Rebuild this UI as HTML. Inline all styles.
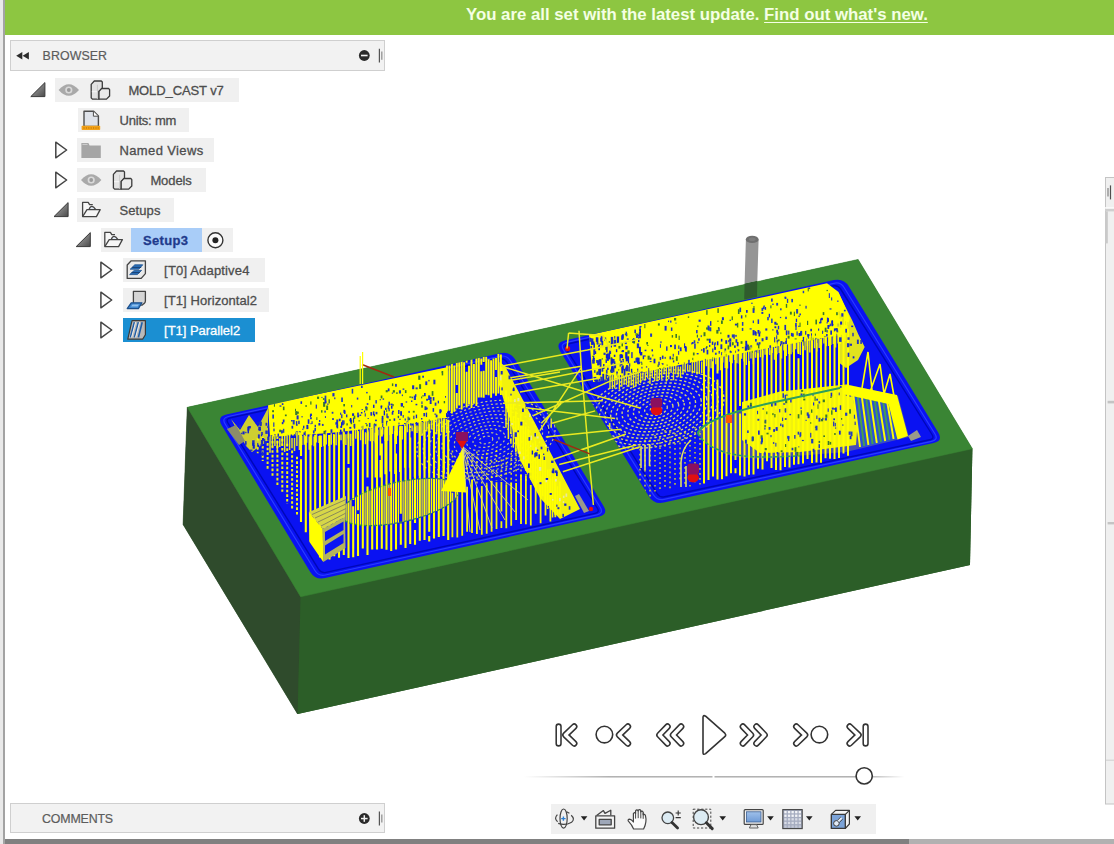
<!DOCTYPE html>
<html lang="en">
<head>
<meta charset="utf-8">
<title>MOLD_CAST v7</title>
<style>
html,body{margin:0;padding:0;}
body{width:1114px;height:844px;position:relative;overflow:hidden;background:#fff;font-family:"Liberation Sans",sans-serif;font-size:12px;color:#4a4a4a;}
.abs{position:absolute;}
#lstripe{left:0;top:0;width:3px;height:844px;background:#e9e9e9;}
#lline{left:3px;top:0;width:1.5px;height:844px;background:#a3a3a3;}
#banner{left:4.5px;top:0;width:1110px;height:35px;background:#8dc641;}
#banner span{position:absolute;left:461.5px;top:5.4px;white-space:nowrap;color:#f4ffe4;font-weight:bold;font-size:16.8px;line-height:20px;}
#banner u{text-decoration-thickness:1.2px;text-underline-offset:2px;}
.hdr{left:10px;width:372.6px;height:28.4px;background:#f2f2f2;border:1px solid #cfcfcf;box-sizing:content-box;}
.hdr .t{position:absolute;top:0;line-height:30px;font-size:12.4px;color:#5c5c5c;white-space:nowrap;-webkit-text-stroke:0.2px;}
.rowbg{position:absolute;height:24.4px;background:#f0f0f0;}
.lbl{position:absolute;white-space:nowrap;line-height:24px;height:24px;font-size:13px;color:#4a4a4a;-webkit-text-stroke:0.3px;}
#botbar1{left:4.5px;top:838.8px;width:904px;height:6px;background:#808080;}
#botbar2{left:908.6px;top:838.8px;width:206px;height:6px;background:#b1b1b1;}
#navbar{left:550.5px;top:804.4px;width:325.5px;height:29.2px;background:#f0f0f0;}
svg{position:absolute;left:0;top:0;overflow:visible;}
</style>
</head>
<body>
<div class="abs" id="lstripe"></div>
<div class="abs" id="lline"></div>
<div class="abs" id="banner"><span>You are all set with the latest update. <u>Find out what's new.</u></span></div>
<svg width="1114" height="844" viewBox="0 0 1114 844">
<defs><clipPath id="cl"><path d="M221.8 425.4 Q216.6 416.8 226.4 414.6 L500.2 353.2 Q510.0 351.0 515.2 359.6 L603.5 505.9 Q608.7 514.5 598.9 516.7 L325.1 578.1 Q315.3 580.3 310.1 571.7 Z"/></clipPath><clipPath id="cr"><path d="M560.2 351.2 Q555.0 342.7 564.8 340.5 L833.9 280.1 Q843.7 277.9 848.9 286.4 L938.2 432.5 Q943.4 441.0 933.6 443.1 L663.8 502.6 Q654.0 504.7 648.8 496.2 Z"/></clipPath><clipPath id="cell"><ellipse cx="400" cy="502" rx="61" ry="20" transform="rotate(-12.5 400 502)"/></clipPath></defs>
<polygon points="187.3,407.3 858.1,259.4 972.4,448.7 970.0,565.0 297.6,714.0 183.1,524.5" fill="#2c5e28"/>
<polygon points="187.3,407.3 300.6,596.8 297.6,714.0 183.1,524.5" fill="#2f4b2c" stroke="#2f4b2c" stroke-width="0.6"/>
<polygon points="300.6,596.8 972.4,448.7 970.0,565.0 297.6,714.0" fill="#2c5e28"/>
<polygon points="187.3,407.3 858.1,259.4 972.4,448.7 300.6,596.8" fill="#3a8534" stroke="#3a8534" stroke-width="0.5"/>
<path d="M745.9 239.4 L744.6 283.6 L757.3 280.8 L758.6 239.4 Z" fill="#959595"/>
<path d="M744.6 283.6 L744.2 299.6 L757 296.8 L757.3 280.8 Z" fill="#2f5c2d"/>
<ellipse cx="752.2" cy="239.4" rx="6.4" ry="3.7" fill="#6f6f6f"/><ellipse cx="752.2" cy="239.2" rx="3.4" ry="1.8" fill="#7d7d7d"/>
<path d="M221.8 425.4 Q216.6 416.8 226.4 414.6 L500.2 353.2 Q510.0 351.0 515.2 359.6 L603.5 505.9 Q608.7 514.5 598.9 516.7 L325.1 578.1 Q315.3 580.3 310.1 571.7 Z" fill="#0a12f2"/>
<path d="M225.1 424.0 Q221.5 418.0 228.3 416.5 L499.9 356.3 Q506.8 354.8 510.4 360.8 L600.2 507.3 Q603.8 513.3 597.0 514.8 L325.4 575.0 Q318.5 576.5 314.9 570.5 Z" fill="none" stroke="#2a3cff" stroke-width="1.2"/>
<path d="M228.0 423.2 Q225.3 419.0 230.2 417.9 L499.3 358.9 Q504.2 357.9 506.8 362.1 L597.3 508.1 Q600.0 512.3 595.1 513.4 L326.0 572.4 Q321.1 573.4 318.5 569.2 Z" fill="none" stroke="#0008b8" stroke-width="1.4"/>
<path d="M560.2 351.2 Q555.0 342.7 564.8 340.5 L833.9 280.1 Q843.7 277.9 848.9 286.4 L938.2 432.5 Q943.4 441.0 933.6 443.1 L663.8 502.6 Q654.0 504.7 648.8 496.2 Z" fill="#0a12f2"/>
<path d="M563.5 349.9 Q559.8 343.9 566.7 342.4 L833.7 283.3 Q840.5 281.7 844.2 287.7 L934.9 433.8 Q938.6 439.8 931.7 441.3 L664.1 499.4 Q657.2 500.9 653.5 494.9 Z" fill="none" stroke="#2a3cff" stroke-width="1.2"/>
<path d="M566.4 349.1 Q563.7 344.9 568.6 343.8 L833.1 285.9 Q837.9 284.8 840.6 289.0 L932.0 434.5 Q934.7 438.8 929.8 439.8 L664.7 496.8 Q659.8 497.8 657.1 493.6 Z" fill="none" stroke="#0008b8" stroke-width="1.4"/>
<g clip-path="url(#cl)">
<ellipse cx="486" cy="440" rx="6.9" ry="3.7" fill="none" stroke="#d4d47a" stroke-width="1.2" stroke-dasharray="2.2 2.4" transform="rotate(-12 486 440)" opacity="0.9"/><ellipse cx="486" cy="440" rx="13.2" ry="7.1" fill="none" stroke="#d4d47a" stroke-width="1.2" stroke-dasharray="2.2 2.4" transform="rotate(-12 486 440)" opacity="0.9"/><ellipse cx="486" cy="440" rx="19.5" ry="10.5" fill="none" stroke="#d4d47a" stroke-width="1.2" stroke-dasharray="2.2 2.4" transform="rotate(-12 486 440)" opacity="0.9"/><ellipse cx="486" cy="440" rx="25.9" ry="13.9" fill="none" stroke="#d4d47a" stroke-width="1.2" stroke-dasharray="2.2 2.4" transform="rotate(-12 486 440)" opacity="0.9"/><ellipse cx="486" cy="440" rx="32.2" ry="17.4" fill="none" stroke="#d4d47a" stroke-width="1.2" stroke-dasharray="2.2 2.4" transform="rotate(-12 486 440)" opacity="0.9"/><ellipse cx="486" cy="440" rx="38.5" ry="20.8" fill="none" stroke="#d4d47a" stroke-width="1.2" stroke-dasharray="2.2 2.4" transform="rotate(-12 486 440)" opacity="0.9"/><ellipse cx="486" cy="440" rx="44.8" ry="24.2" fill="none" stroke="#d4d47a" stroke-width="1.2" stroke-dasharray="2.2 2.4" transform="rotate(-12 486 440)" opacity="0.9"/><ellipse cx="486" cy="440" rx="51.2" ry="27.6" fill="none" stroke="#d4d47a" stroke-width="1.2" stroke-dasharray="2.2 2.4" transform="rotate(-12 486 440)" opacity="0.9"/><ellipse cx="486" cy="440" rx="57.5" ry="31.0" fill="none" stroke="#d4d47a" stroke-width="1.2" stroke-dasharray="2.2 2.4" transform="rotate(-12 486 440)" opacity="0.9"/><ellipse cx="486" cy="440" rx="63.8" ry="34.4" fill="none" stroke="#d4d47a" stroke-width="1.2" stroke-dasharray="2.2 2.4" transform="rotate(-12 486 440)" opacity="0.9"/><ellipse cx="486" cy="440" rx="70.1" ry="37.8" fill="none" stroke="#d4d47a" stroke-width="1.2" stroke-dasharray="2.2 2.4" transform="rotate(-12 486 440)" opacity="0.9"/>
<path d="M252.9 439.7V444.7M257.8 438.0V453.3M262.7 436.7V461.1M267.6 438.5V470.4M272.5 436.4V476.6M277.4 436.4V486.8M282.3 438.8V491.8M287.2 443.7V503.7M292.1 450.6V510.4M297.0 456.7V516.2" stroke="#ffff00" stroke-width="2.0" fill="none" opacity="0.95" stroke-dasharray="2.6 2"/>
<path d="M301.0 435.0V456.1M301.0 459.3V522.1M305.8 434.3V532.3M310.5 434.3V541.4M315.2 434.8V547.9M315.2 548.2V548.2M320.0 435.5V557.6M324.8 431.5V529.9M324.8 535.7V559.9M329.5 434.9V559.4M334.2 434.5V545.3M334.2 551.6V556.2M339.0 434.7V512.1M339.0 520.6V557.7M343.8 429.8V554.9M348.5 433.4V464.1M348.5 467.8V558.0M353.2 427.3V500.0M353.2 506.2V557.3M358.0 427.5V510.2M358.0 514.0V556.0M362.8 428.3V548.4M362.8 552.0V552.0M367.5 426.9V477.5M367.5 486.4V555.1M372.2 428.4V549.5M377.0 425.2V549.5M381.8 425.2V436.4M381.8 443.5V548.8M386.5 424.1V549.7M391.2 424.8V550.9M396.0 424.9V444.1M396.0 453.4V549.5M400.8 425.7V513.8M400.8 523.4V544.8M405.5 421.4V548.1M410.2 423.2V427.9M410.2 437.6V544.0M415.0 420.4V522.9M415.0 530.1V544.8M419.8 420.1V540.7M424.5 418.1V540.1M429.2 422.2V531.7M429.2 536.1V541.5M434.0 416.6V538.5M438.8 416.2V537.1M443.5 418.7V535.9M448.2 419.7V540.1" stroke="#ffff00" stroke-width="2.1" fill="none" opacity="1.0"/>
<path d="M452.4 487.9V489.6M452.4 492.7V537.2M457.3 489.6V537.4M462.2 480.2V535.8M467.1 486.8V531.7M472.0 479.8V533.0M476.9 487.5V534.0M481.8 486.0V534.8M486.7 484.4V533.8M491.6 481.2V531.7M496.5 482.3V529.1M501.4 481.9V511.4M501.4 521.3V528.0M506.3 484.4V528.2M511.2 482.4V525.8M516.1 483.0V519.9M521.0 474.4V524.1M525.9 475.9V524.2M530.8 479.3V479.8M530.8 484.9V525.4M535.7 479.4V513.7M535.7 517.3V517.3M540.6 476.6V523.2M545.5 478.3V515.4M550.4 479.2V521.6M555.3 474.5V517.3" stroke="#ffff00" stroke-width="1.8" fill="none" opacity="0.95"/>
<path d="M452.4 450.6V486.0M457.3 459.0V490.2M462.2 457.5V491.4M467.1 452.3V482.0M472.0 454.4V483.3M476.9 451.6V485.0M481.8 456.5V485.9M486.7 452.8V490.1M491.6 460.8V485.4M496.5 449.9V480.4M501.4 459.5V480.5M506.3 457.5V486.8M511.2 452.7V489.5M516.1 449.2V481.6M521.0 454.5V480.3M525.9 459.0V482.8M530.8 450.7V480.6M535.7 456.6V485.4" stroke="#ffff00" stroke-width="1.6" fill="none" opacity="0.8" stroke-dasharray="2 3"/>
<path d="M375.4 432.7V477.5M380.3 436.0V455.6M380.3 459.9V477.4M385.2 424.0V474.3M390.1 425.3V471.5M395.0 430.9V473.9M399.9 431.0V471.9M404.8 432.2V467.8M409.7 429.3V467.8M414.6 427.5V476.7M419.5 426.2V475.8M424.4 430.1V470.3M429.3 420.5V472.9M434.2 425.2V467.7M434.2 472.4V472.4M439.1 428.5V469.7M444.0 420.0V473.7" stroke="#ffff00" stroke-width="1.7" fill="none" opacity="1.0"/>
<path d="M506.0 390.5V427.8M508.4 396.8V439.0M510.9 395.9V434.1M510.9 438.3V443.7M513.4 403.2V409.8M513.4 416.4V447.7M515.8 411.4V452.5M518.3 417.9V453.4M520.7 413.6V454.9M523.2 419.9V464.3M525.6 426.5V469.7M528.1 428.7V469.4M530.5 438.9V472.0M533.0 443.8V479.4M535.4 440.5V483.8M537.9 448.8V483.0M540.3 452.2V491.0M542.8 456.9V496.2M545.2 456.3V501.0M547.7 469.5V509.1M550.1 468.9V505.4M552.6 476.6V517.5M555.0 475.9V514.7M557.5 486.3V514.4M559.9 481.6V514.5" stroke="#ffff00" stroke-width="1.5" fill="none" opacity="0.95"/>
<g clip-path="url(#cell)"><path d="M336.6 470.0V535.0M341.4 470.0V535.0M346.1 470.0V535.0M350.9 470.0V535.0M355.6 470.0V535.0M360.4 470.0V535.0M365.1 470.0V535.0M369.9 470.0V535.0M374.6 470.0V535.0M379.4 470.0V535.0M384.1 470.0V535.0M388.9 470.0V535.0M393.6 470.0V535.0M398.4 470.0V535.0M403.1 470.0V535.0M407.9 470.0V535.0M412.6 470.0V535.0M417.4 470.0V535.0M422.1 470.0V535.0M426.9 470.0V535.0M431.6 470.0V535.0M436.4 470.0V535.0M441.1 470.0V535.0M445.9 470.0V535.0M450.6 470.0V535.0M455.4 470.0V535.0M460.1 470.0V535.0" stroke="#ffff00" stroke-width="1.25" fill="none" opacity="1.0"/></g>
<ellipse cx="400" cy="502" rx="61" ry="20" transform="rotate(-12.5 400 502)" fill="none" stroke="#2f8f4a" stroke-width="1.3" stroke-dasharray="3 2"/>
<polygon points="268.0,404.6 410.0,375.0 447.0,367.3 447.0,418.0 410.0,424.0 330.0,433.0 270.0,437.0" fill="#ffff00"/>
<rect x="366.7" y="403.2" width="1.7" height="1.6" fill="#1a2acc"/><rect x="388.5" y="407.7" width="1.2" height="3.6" fill="#1a2acc"/><rect x="404.9" y="390.1" width="1.6" height="3.0" fill="#3a7a2a"/><rect x="332.4" y="393.1" width="2.1" height="3.3" fill="#1a2acc"/><rect x="380.7" y="395.5" width="1.7" height="2.9" fill="#3a7a2a"/><rect x="412.1" y="385.3" width="2.1" height="3.9" fill="#1a2acc"/><rect x="413.8" y="395.6" width="2.1" height="4.4" fill="#223ec0"/><rect x="334.2" y="397.4" width="1.2" height="1.8" fill="#1a2acc"/><rect x="331.7" y="411.8" width="1.7" height="1.9" fill="#223ec0"/><rect x="281.8" y="403.2" width="1.6" height="1.8" fill="#1a2acc"/><rect x="272.1" y="410.2" width="1.9" height="2.0" fill="#3a7a2a"/><rect x="358.4" y="420.4" width="1.8" height="1.0" fill="#3a7a2a"/><rect x="312.9" y="430.4" width="1.7" height="3.0" fill="#223ec0"/><rect x="382.2" y="423.7" width="1.1" height="3.3" fill="#1a2acc"/><rect x="421.2" y="405.1" width="1.7" height="2.6" fill="#3a7a2a"/><rect x="343.3" y="404.0" width="1.7" height="2.4" fill="#3a7a2a"/><rect x="434.4" y="413.6" width="1.9" height="1.1" fill="#1a2acc"/><rect x="372.9" y="411.4" width="1.5" height="3.6" fill="#1a2acc"/><rect x="428.7" y="419.5" width="1.1" height="4.8" fill="#3a7a2a"/><rect x="281.2" y="430.4" width="1.5" height="2.8" fill="#1a2acc"/><rect x="293.8" y="434.2" width="1.3" height="3.7" fill="#1a2acc"/><rect x="379.7" y="399.1" width="1.2" height="1.2" fill="#223ec0"/><rect x="375.6" y="411.9" width="1.8" height="2.4" fill="#223ec0"/><rect x="438.5" y="418.5" width="1.3" height="1.4" fill="#3a7a2a"/><rect x="408.4" y="410.9" width="1.4" height="2.0" fill="#223ec0"/><rect x="397.8" y="416.0" width="1.2" height="2.1" fill="#1a2acc"/><rect x="344.1" y="410.7" width="1.1" height="3.1" fill="#1a2acc"/><rect x="443.7" y="401.0" width="1.4" height="2.3" fill="#3a7a2a"/><rect x="412.8" y="410.8" width="1.9" height="1.8" fill="#3a7a2a"/><rect x="401.8" y="394.5" width="1.2" height="1.6" fill="#223ec0"/><rect x="326.2" y="405.5" width="1.9" height="4.5" fill="#3a7a2a"/><rect x="385.0" y="407.8" width="1.6" height="2.2" fill="#223ec0"/><rect x="282.9" y="406.6" width="1.6" height="3.6" fill="#3a7a2a"/><rect x="323.5" y="430.8" width="1.7" height="3.7" fill="#3a7a2a"/><rect x="397.8" y="415.7" width="1.3" height="1.5" fill="#3a7a2a"/><rect x="385.7" y="390.1" width="2.1" height="2.2" fill="#3a7a2a"/><rect x="346.4" y="423.3" width="1.4" height="2.2" fill="#3a7a2a"/><rect x="441.2" y="418.2" width="1.6" height="1.3" fill="#3a7a2a"/><rect x="272.3" y="414.5" width="1.7" height="4.1" fill="#223ec0"/><rect x="368.9" y="422.9" width="1.6" height="4.2" fill="#223ec0"/><rect x="349.3" y="426.9" width="2.0" height="1.8" fill="#1a2acc"/><rect x="365.4" y="406.9" width="2.2" height="3.5" fill="#3a7a2a"/><rect x="279.5" y="405.4" width="1.9" height="1.3" fill="#1a2acc"/><rect x="414.1" y="396.7" width="1.9" height="2.9" fill="#223ec0"/><rect x="328.5" y="399.3" width="1.4" height="4.1" fill="#3a7a2a"/><rect x="388.4" y="401.7" width="1.6" height="3.8" fill="#223ec0"/><rect x="351.2" y="405.0" width="1.0" height="2.4" fill="#1a2acc"/><rect x="411.6" y="396.7" width="1.5" height="1.6" fill="#223ec0"/><rect x="297.0" y="411.6" width="1.8" height="2.2" fill="#3a7a2a"/><rect x="441.6" y="371.4" width="1.4" height="1.4" fill="#223ec0"/><rect x="295.8" y="431.4" width="2.1" height="3.9" fill="#1a2acc"/><rect x="310.1" y="417.3" width="1.7" height="1.9" fill="#1a2acc"/><rect x="428.1" y="395.4" width="2.1" height="4.6" fill="#223ec0"/><rect x="366.1" y="424.3" width="1.6" height="2.0" fill="#3a7a2a"/><rect x="431.7" y="391.1" width="1.7" height="4.7" fill="#3a7a2a"/><rect x="422.4" y="395.1" width="1.3" height="1.5" fill="#3a7a2a"/><rect x="406.6" y="422.2" width="1.1" height="4.5" fill="#1a2acc"/><rect x="343.4" y="428.3" width="1.5" height="4.0" fill="#1a2acc"/><rect x="314.4" y="427.9" width="1.6" height="3.4" fill="#223ec0"/><rect x="315.7" y="404.6" width="1.2" height="4.0" fill="#1a2acc"/><rect x="304.6" y="431.2" width="1.2" height="1.5" fill="#3a7a2a"/><rect x="316.3" y="417.2" width="1.1" height="2.8" fill="#3a7a2a"/><rect x="282.8" y="419.5" width="1.7" height="2.9" fill="#1a2acc"/><rect x="409.3" y="396.4" width="2.1" height="1.3" fill="#3a7a2a"/><rect x="305.3" y="405.2" width="1.6" height="1.6" fill="#3a7a2a"/><rect x="324.6" y="395.6" width="1.7" height="4.8" fill="#223ec0"/><rect x="396.0" y="392.4" width="1.8" height="1.4" fill="#3a7a2a"/><rect x="389.0" y="419.3" width="1.9" height="1.5" fill="#3a7a2a"/><rect x="395.1" y="383.9" width="1.7" height="2.8" fill="#1a2acc"/><rect x="295.2" y="411.1" width="2.1" height="3.9" fill="#3a7a2a"/><rect x="403.1" y="406.0" width="1.1" height="1.7" fill="#3a7a2a"/><rect x="398.9" y="390.3" width="2.1" height="3.2" fill="#223ec0"/><rect x="382.6" y="398.4" width="1.5" height="1.4" fill="#223ec0"/><rect x="284.9" y="414.5" width="1.8" height="1.7" fill="#3a7a2a"/><rect x="273.8" y="436.1" width="1.5" height="4.0" fill="#3a7a2a"/><rect x="432.8" y="397.1" width="1.6" height="3.5" fill="#1a2acc"/><rect x="415.0" y="394.2" width="1.4" height="2.6" fill="#1a2acc"/><rect x="398.1" y="410.0" width="1.4" height="4.0" fill="#1a2acc"/><rect x="386.2" y="409.7" width="1.0" height="2.3" fill="#3a7a2a"/><rect x="322.9" y="398.1" width="1.7" height="1.8" fill="#3a7a2a"/><rect x="366.1" y="391.9" width="1.6" height="1.5" fill="#223ec0"/><rect x="303.5" y="432.4" width="2.2" height="3.7" fill="#1a2acc"/><rect x="386.0" y="421.4" width="1.2" height="2.8" fill="#3a7a2a"/><rect x="392.8" y="390.2" width="2.1" height="2.4" fill="#3a7a2a"/><rect x="426.1" y="398.8" width="1.9" height="1.9" fill="#223ec0"/><rect x="365.3" y="406.4" width="1.7" height="2.0" fill="#223ec0"/><rect x="415.6" y="387.4" width="2.1" height="1.9" fill="#223ec0"/><rect x="375.0" y="423.8" width="1.5" height="2.5" fill="#223ec0"/><rect x="292.7" y="420.0" width="2.0" height="4.5" fill="#223ec0"/><rect x="373.9" y="423.3" width="1.0" height="1.8" fill="#3a7a2a"/><rect x="273.9" y="404.1" width="1.1" height="2.6" fill="#3a7a2a"/><rect x="361.0" y="385.7" width="1.7" height="2.3" fill="#223ec0"/><rect x="408.3" y="417.6" width="1.9" height="2.5" fill="#3a7a2a"/><rect x="375.4" y="400.1" width="1.5" height="3.4" fill="#223ec0"/><rect x="369.1" y="395.7" width="1.3" height="4.4" fill="#3a7a2a"/><rect x="341.2" y="397.5" width="1.7" height="4.5" fill="#223ec0"/><rect x="327.1" y="403.6" width="1.5" height="1.1" fill="#1a2acc"/><rect x="321.0" y="410.2" width="1.5" height="2.4" fill="#3a7a2a"/><rect x="402.6" y="388.5" width="1.7" height="1.3" fill="#1a2acc"/><rect x="419.1" y="384.2" width="2.0" height="4.7" fill="#3a7a2a"/><rect x="392.4" y="404.0" width="1.3" height="2.2" fill="#3a7a2a"/><rect x="424.0" y="393.0" width="1.7" height="3.2" fill="#1a2acc"/><rect x="307.7" y="419.3" width="1.7" height="4.5" fill="#1a2acc"/><rect x="425.9" y="407.4" width="1.5" height="2.1" fill="#223ec0"/><rect x="279.2" y="429.7" width="2.0" height="2.5" fill="#3a7a2a"/><rect x="391.9" y="383.4" width="1.4" height="2.7" fill="#3a7a2a"/><rect x="323.1" y="402.0" width="2.1" height="4.8" fill="#3a7a2a"/><rect x="425.3" y="381.4" width="2.0" height="3.7" fill="#1a2acc"/><rect x="303.0" y="425.7" width="1.4" height="2.8" fill="#1a2acc"/><rect x="381.7" y="415.9" width="1.7" height="3.0" fill="#1a2acc"/><rect x="302.3" y="428.6" width="1.1" height="1.4" fill="#223ec0"/><rect x="317.0" y="396.6" width="2.1" height="2.3" fill="#3a7a2a"/><rect x="422.2" y="375.7" width="1.8" height="2.0" fill="#223ec0"/><rect x="310.1" y="413.6" width="1.9" height="2.4" fill="#223ec0"/><rect x="428.3" y="379.9" width="1.3" height="1.5" fill="#223ec0"/><rect x="284.1" y="435.8" width="1.5" height="3.0" fill="#223ec0"/><rect x="373.0" y="404.7" width="1.5" height="3.2" fill="#1a2acc"/><rect x="319.0" y="420.0" width="1.3" height="2.1" fill="#223ec0"/><rect x="273.2" y="422.4" width="1.2" height="4.4" fill="#223ec0"/><rect x="350.6" y="419.6" width="1.5" height="4.6" fill="#3a7a2a"/><rect x="325.4" y="401.0" width="1.0" height="2.1" fill="#223ec0"/><rect x="390.5" y="403.6" width="2.1" height="1.7" fill="#1a2acc"/><rect x="387.7" y="405.5" width="1.3" height="3.7" fill="#223ec0"/><rect x="310.2" y="401.4" width="1.3" height="3.2" fill="#3a7a2a"/><rect x="441.7" y="371.0" width="1.5" height="4.4" fill="#3a7a2a"/><rect x="356.8" y="397.6" width="1.5" height="2.0" fill="#1a2acc"/><rect x="281.0" y="430.5" width="1.7" height="3.1" fill="#223ec0"/><rect x="324.3" y="410.6" width="1.6" height="2.0" fill="#223ec0"/><rect x="357.2" y="412.6" width="1.6" height="2.5" fill="#1a2acc"/><rect x="296.6" y="415.4" width="2.0" height="4.0" fill="#1a2acc"/><rect x="324.5" y="399.8" width="1.8" height="3.7" fill="#1a2acc"/><rect x="291.0" y="420.0" width="1.7" height="1.5" fill="#223ec0"/><rect x="349.5" y="419.2" width="1.0" height="1.9" fill="#223ec0"/><rect x="321.4" y="396.9" width="1.1" height="1.1" fill="#223ec0"/><rect x="404.6" y="418.5" width="1.3" height="2.0" fill="#223ec0"/><rect x="421.1" y="396.5" width="1.1" height="1.9" fill="#3a7a2a"/><rect x="340.1" y="412.6" width="1.1" height="2.3" fill="#223ec0"/><rect x="433.4" y="379.7" width="2.0" height="4.6" fill="#1a2acc"/><rect x="336.2" y="421.8" width="1.3" height="2.3" fill="#1a2acc"/><rect x="410.0" y="423.3" width="1.6" height="2.5" fill="#223ec0"/><rect x="351.7" y="388.8" width="1.5" height="4.8" fill="#223ec0"/><rect x="300.5" y="401.3" width="1.6" height="2.6" fill="#1a2acc"/><rect x="391.8" y="392.6" width="1.3" height="1.1" fill="#1a2acc"/><rect x="400.7" y="403.0" width="1.7" height="3.5" fill="#1a2acc"/><rect x="295.5" y="432.6" width="1.4" height="3.9" fill="#223ec0"/><rect x="418.2" y="375.6" width="2.2" height="4.2" fill="#3a7a2a"/><rect x="282.9" y="428.8" width="1.4" height="4.0" fill="#223ec0"/><rect x="387.8" y="388.4" width="1.7" height="2.9" fill="#1a2acc"/><rect x="295.0" y="408.8" width="1.0" height="2.2" fill="#3a7a2a"/><rect x="353.7" y="415.7" width="1.6" height="3.1" fill="#3a7a2a"/>
<rect x="398.4" y="422.6" width="1.1" height="1.9" fill="#2030c0"/><rect x="364.7" y="413.3" width="1.1" height="3.2" fill="#2030c0"/><rect x="381.6" y="418.3" width="1.8" height="5.1" fill="#2030c0"/><rect x="421.0" y="418.0" width="1.4" height="1.5" fill="#2030c0"/><rect x="311.5" y="421.2" width="1.1" height="2.8" fill="#2030c0"/><rect x="357.2" y="415.1" width="1.9" height="2.2" fill="#1a2acc"/><rect x="341.2" y="414.4" width="1.2" height="3.8" fill="#1020d0"/><rect x="362.1" y="425.9" width="1.9" height="4.4" fill="#2030c0"/><rect x="373.1" y="424.2" width="1.6" height="3.9" fill="#1020d0"/><rect x="429.7" y="399.2" width="1.9" height="4.8" fill="#2030c0"/><rect x="373.7" y="414.2" width="1.3" height="2.1" fill="#1020d0"/><rect x="383.7" y="410.5" width="1.3" height="4.8" fill="#1020d0"/><rect x="406.6" y="421.0" width="1.6" height="2.7" fill="#2030c0"/><rect x="352.1" y="413.3" width="2.0" height="2.6" fill="#1020d0"/><rect x="391.0" y="405.7" width="1.5" height="3.0" fill="#1020d0"/><rect x="310.4" y="423.2" width="1.2" height="1.0" fill="#1a2acc"/><rect x="273.4" y="428.6" width="1.2" height="2.7" fill="#1020d0"/><rect x="298.2" y="420.7" width="1.5" height="3.4" fill="#2030c0"/><rect x="343.4" y="409.8" width="1.7" height="3.1" fill="#1a2acc"/><rect x="301.5" y="416.1" width="1.1" height="1.3" fill="#1020d0"/><rect x="324.9" y="430.5" width="1.5" height="3.9" fill="#1020d0"/><rect x="298.8" y="431.3" width="1.9" height="1.2" fill="#2030c0"/><rect x="340.3" y="425.8" width="1.7" height="2.1" fill="#1a2acc"/><rect x="314.6" y="424.8" width="1.3" height="2.4" fill="#1020d0"/><rect x="370.4" y="412.1" width="1.7" height="3.6" fill="#2030c0"/><rect x="336.7" y="422.8" width="1.2" height="1.8" fill="#1020d0"/><rect x="353.5" y="423.8" width="1.8" height="4.9" fill="#2030c0"/><rect x="391.7" y="412.0" width="1.6" height="2.7" fill="#1a2acc"/><rect x="445.0" y="396.1" width="1.7" height="1.5" fill="#1020d0"/><rect x="365.3" y="428.5" width="1.4" height="4.8" fill="#1a2acc"/><rect x="421.4" y="401.4" width="1.1" height="2.8" fill="#1a2acc"/><rect x="379.3" y="426.9" width="2.0" height="2.6" fill="#1a2acc"/><rect x="423.4" y="413.0" width="1.8" height="3.3" fill="#2030c0"/><rect x="425.9" y="412.6" width="1.2" height="4.7" fill="#2030c0"/><rect x="380.7" y="405.8" width="1.2" height="3.0" fill="#2030c0"/><rect x="367.6" y="418.0" width="1.2" height="1.0" fill="#2030c0"/><rect x="332.2" y="418.1" width="1.6" height="1.9" fill="#1a2acc"/><rect x="386.3" y="420.8" width="1.3" height="4.9" fill="#1020d0"/><rect x="446.0" y="413.1" width="1.8" height="4.0" fill="#1020d0"/><rect x="365.4" y="423.0" width="1.3" height="1.1" fill="#1a2acc"/><rect x="324.9" y="416.1" width="1.0" height="1.9" fill="#2030c0"/><rect x="400.2" y="411.2" width="1.8" height="4.5" fill="#1020d0"/><rect x="435.7" y="414.7" width="1.8" height="2.7" fill="#1a2acc"/><rect x="335.4" y="422.2" width="1.8" height="2.5" fill="#1a2acc"/><rect x="281.8" y="422.1" width="1.6" height="2.1" fill="#1020d0"/><rect x="401.3" y="403.1" width="1.7" height="3.3" fill="#1a2acc"/><rect x="286.8" y="434.9" width="1.8" height="4.2" fill="#1020d0"/><rect x="425.8" y="407.8" width="1.8" height="1.5" fill="#2030c0"/><rect x="318.4" y="423.1" width="1.9" height="2.4" fill="#1020d0"/><rect x="407.6" y="416.6" width="1.0" height="4.1" fill="#1a2acc"/><rect x="336.9" y="421.7" width="1.2" height="3.6" fill="#2030c0"/><rect x="421.6" y="421.0" width="1.5" height="3.4" fill="#1020d0"/><rect x="291.5" y="425.8" width="1.7" height="2.8" fill="#2030c0"/><rect x="344.2" y="410.5" width="1.2" height="3.5" fill="#1a2acc"/><rect x="277.5" y="433.6" width="1.5" height="2.9" fill="#2030c0"/><rect x="375.0" y="419.6" width="1.9" height="1.6" fill="#2030c0"/><rect x="353.0" y="417.7" width="1.1" height="5.1" fill="#2030c0"/><rect x="361.6" y="409.0" width="1.2" height="1.1" fill="#2030c0"/><rect x="368.2" y="427.8" width="1.5" height="2.0" fill="#2030c0"/><rect x="411.0" y="400.5" width="1.4" height="1.4" fill="#1020d0"/><rect x="343.6" y="420.4" width="1.0" height="3.9" fill="#2030c0"/><rect x="429.6" y="397.1" width="2.0" height="1.9" fill="#1a2acc"/><rect x="441.7" y="418.1" width="2.0" height="2.6" fill="#2030c0"/><rect x="405.6" y="401.4" width="1.6" height="1.2" fill="#2030c0"/><rect x="290.5" y="434.5" width="1.6" height="2.5" fill="#1020d0"/><rect x="306.4" y="424.9" width="1.9" height="4.2" fill="#1020d0"/><rect x="295.9" y="421.1" width="1.4" height="4.4" fill="#2030c0"/><rect x="360.9" y="412.0" width="1.5" height="1.5" fill="#1020d0"/><rect x="424.5" y="406.3" width="1.9" height="3.8" fill="#2030c0"/><rect x="309.9" y="414.5" width="1.2" height="2.7" fill="#1020d0"/><rect x="321.9" y="423.9" width="1.7" height="2.0" fill="#2030c0"/><rect x="336.3" y="419.5" width="1.9" height="2.6" fill="#2030c0"/><rect x="330.5" y="429.3" width="1.9" height="3.5" fill="#1a2acc"/><rect x="386.4" y="413.5" width="1.2" height="4.3" fill="#1020d0"/><rect x="336.3" y="425.1" width="1.7" height="2.4" fill="#1020d0"/><rect x="359.5" y="414.6" width="1.7" height="1.3" fill="#1020d0"/><rect x="339.9" y="429.6" width="1.6" height="3.9" fill="#1020d0"/><rect x="341.0" y="422.2" width="1.2" height="5.2" fill="#1020d0"/><rect x="358.0" y="429.7" width="1.5" height="1.4" fill="#1020d0"/><rect x="270.6" y="435.2" width="1.7" height="4.3" fill="#2030c0"/><rect x="387.3" y="415.9" width="1.3" height="2.5" fill="#1020d0"/><rect x="349.9" y="418.0" width="1.5" height="4.6" fill="#1020d0"/><rect x="413.3" y="415.7" width="1.1" height="3.4" fill="#1020d0"/><rect x="341.9" y="420.3" width="1.9" height="5.0" fill="#2030c0"/><rect x="415.5" y="403.8" width="1.8" height="1.5" fill="#1a2acc"/><rect x="432.6" y="408.1" width="1.5" height="3.7" fill="#1a2acc"/><rect x="437.5" y="418.4" width="1.5" height="4.8" fill="#2030c0"/><rect x="380.7" y="405.5" width="1.6" height="1.9" fill="#1020d0"/><rect x="346.0" y="414.5" width="1.4" height="2.8" fill="#2030c0"/><rect x="414.9" y="423.0" width="1.7" height="1.1" fill="#2030c0"/><rect x="402.7" y="415.0" width="1.0" height="2.7" fill="#1020d0"/><rect x="440.1" y="409.7" width="1.6" height="2.5" fill="#2030c0"/><rect x="307.1" y="426.8" width="1.1" height="1.8" fill="#1020d0"/><rect x="361.4" y="426.4" width="1.1" height="1.4" fill="#2030c0"/><rect x="447.0" y="415.1" width="1.4" height="1.4" fill="#1020d0"/><rect x="274.0" y="434.2" width="1.8" height="3.4" fill="#1020d0"/><rect x="415.8" y="414.6" width="1.3" height="3.6" fill="#1020d0"/><rect x="404.0" y="423.1" width="1.8" height="2.9" fill="#1a2acc"/><rect x="439.3" y="409.3" width="1.8" height="4.0" fill="#1a2acc"/><rect x="438.8" y="418.1" width="1.9" height="1.9" fill="#2030c0"/><rect x="437.7" y="400.7" width="1.3" height="2.7" fill="#2030c0"/><rect x="434.7" y="402.6" width="1.7" height="3.1" fill="#2030c0"/><rect x="392.1" y="410.7" width="1.8" height="1.4" fill="#1a2acc"/><rect x="415.7" y="422.0" width="1.4" height="4.4" fill="#1a2acc"/><rect x="338.8" y="418.7" width="1.8" height="2.5" fill="#1a2acc"/><rect x="296.2" y="424.3" width="1.4" height="1.4" fill="#2030c0"/><rect x="399.3" y="418.7" width="1.3" height="1.3" fill="#2030c0"/><rect x="336.8" y="424.8" width="1.4" height="3.6" fill="#1a2acc"/><rect x="364.0" y="410.6" width="1.1" height="1.8" fill="#1a2acc"/><rect x="393.6" y="418.4" width="1.6" height="2.4" fill="#1020d0"/>
<path d="M270.0 436.6V452.8M272.4 435.7V447.2M274.9 434.6V445.9M277.3 440.4V451.4M279.8 438.2V447.1M282.2 433.4V445.7M284.7 433.3V451.9M287.1 434.7V446.4M289.6 432.5V449.9M292.0 437.9V448.3M294.5 437.9V451.1M296.9 432.0V446.0M299.4 432.3V450.1M301.8 436.1V445.1M304.3 435.1V444.7M306.7 431.0V442.7M309.2 436.6V449.8M311.6 431.3V445.2M314.1 436.5V446.3M316.5 430.8V442.5M319.0 436.0V442.9M321.4 435.4V447.0M323.9 433.9V446.3M326.3 431.5V444.5M328.8 435.1V446.1M331.2 433.2V444.7M333.7 434.0V443.3M336.1 429.9V445.3M338.6 430.0V445.7M341.0 434.6V440.2M343.5 431.6V443.8M345.9 434.3V444.9M348.4 429.0V438.6M350.8 433.8V446.0M353.3 427.5V440.9M355.7 428.5V438.8M358.2 432.9V442.7M360.6 426.1V440.3M363.1 425.8V443.9M365.5 432.2V444.2M368.0 431.4V440.4M370.4 427.2V441.2M372.9 424.1V441.0M375.3 428.0V442.5M377.8 429.8V435.6M380.2 423.6V436.0M382.7 427.7V434.4M385.1 429.4V441.0M387.6 422.2V440.7M390.0 423.2V434.9M392.5 423.1V434.1M394.9 424.9V439.5M397.4 421.5V435.7M399.8 426.3V436.8M402.3 426.0V439.6M404.7 423.9V438.5M407.2 421.5V432.3M409.6 424.8V431.9M412.1 425.6V431.2M414.5 420.4V432.4M417.0 425.6V433.0M419.4 418.6V430.9M421.9 421.9V435.8M424.3 422.9V434.1M426.8 417.1V431.4M429.2 423.8V429.8M431.7 418.9V429.6M434.1 418.3V429.2M436.6 418.3V434.3M439.0 416.8V427.2M441.5 417.5V432.3M443.9 418.4V429.0M446.4 418.9V433.2" stroke="#ffff00" stroke-width="1.5" fill="none" opacity="0.9"/>
<path d="M447.0 365.6V411.6M449.4 365.4V410.8M451.9 362.7V413.5M454.3 365.5V411.7M456.8 360.4V385.0M456.8 393.1V408.6M459.2 361.4V405.4M461.7 360.0V409.6M464.1 362.2V403.5M466.6 359.3V362.8M466.6 371.7V407.5M469.0 365.7V404.5M471.5 359.0V408.1M473.9 363.9V403.7M476.4 356.7V406.0M478.8 356.1V397.5M481.3 358.5V364.8M481.3 371.2V397.5M483.7 356.4V362.1M483.7 370.7V397.8M486.2 356.7V394.7M488.6 359.2V395.2M491.1 360.2V397.7M493.5 358.4V393.5M493.5 398.8V398.8M496.0 357.9V370.1M496.0 377.1V395.8M498.4 353.7V393.6M500.9 354.6V394.9" stroke="#ffff00" stroke-width="1.9" fill="none" opacity="1.0"/>
<polygon points="231.0,419.0 240.0,430.0 249.0,415.0 258.0,427.0 268.0,408.0 268.0,440.0 252.0,452.0 246.0,446.0" fill="#ffff00" opacity="0.8"/>
<rect x="258.3" y="426.7" width="2.6" height="3.4" fill="#1020d0"/><rect x="267.2" y="436.6" width="2.0" height="4.1" fill="#2030c0"/><rect x="239.2" y="425.3" width="1.9" height="3.6" fill="#2030c0"/><rect x="260.9" y="434.4" width="1.3" height="1.8" fill="#1020d0"/><rect x="250.0" y="449.6" width="2.5" height="1.3" fill="#2030c0"/><rect x="262.0" y="438.0" width="2.1" height="2.8" fill="#1020d0"/><rect x="248.3" y="426.0" width="2.6" height="2.4" fill="#2030c0"/><rect x="258.6" y="429.0" width="2.2" height="1.8" fill="#1020d0"/><rect x="264.5" y="440.9" width="1.8" height="3.1" fill="#2030c0"/><rect x="252.7" y="444.4" width="2.1" height="4.3" fill="#1020d0"/><rect x="252.1" y="440.2" width="2.5" height="3.9" fill="#2030c0"/><rect x="245.1" y="441.0" width="1.4" height="4.5" fill="#2030c0"/><rect x="257.2" y="442.8" width="1.2" height="2.9" fill="#1020d0"/><rect x="252.9" y="453.2" width="1.9" height="2.5" fill="#1020d0"/><rect x="257.9" y="434.4" width="1.9" height="4.1" fill="#2030c0"/><rect x="257.2" y="422.2" width="1.4" height="1.3" fill="#2030c0"/><rect x="241.1" y="432.7" width="1.3" height="1.5" fill="#2030c0"/><rect x="242.5" y="431.4" width="2.1" height="3.0" fill="#1020d0"/><rect x="257.4" y="444.8" width="1.8" height="2.2" fill="#1020d0"/><rect x="258.6" y="448.7" width="2.2" height="4.0" fill="#1020d0"/><rect x="259.4" y="421.6" width="2.3" height="4.5" fill="#2030c0"/><rect x="252.1" y="443.2" width="2.1" height="2.6" fill="#1020d0"/><rect x="267.3" y="425.8" width="1.6" height="2.2" fill="#2030c0"/><rect x="247.3" y="426.7" width="2.2" height="3.8" fill="#1020d0"/><rect x="260.5" y="444.1" width="1.8" height="2.6" fill="#2030c0"/><rect x="261.6" y="451.4" width="2.0" height="4.5" fill="#2030c0"/><rect x="244.9" y="442.3" width="1.4" height="1.7" fill="#2030c0"/><rect x="247.5" y="429.8" width="1.5" height="3.5" fill="#1020d0"/><rect x="265.3" y="430.5" width="2.5" height="3.4" fill="#2030c0"/><rect x="261.2" y="432.0" width="1.6" height="3.0" fill="#2030c0"/><rect x="259.2" y="421.8" width="2.3" height="3.0" fill="#2030c0"/><rect x="245.2" y="431.8" width="1.3" height="1.4" fill="#2030c0"/><rect x="263.7" y="439.1" width="1.5" height="4.4" fill="#2030c0"/><rect x="265.5" y="422.8" width="1.8" height="2.9" fill="#2030c0"/><rect x="260.9" y="440.0" width="2.1" height="4.5" fill="#2030c0"/>
<polygon points="227,429 236,425 245,441 239,445" fill="#8c8c6a"/>
<polygon points="499.5,362.0 505.0,366.0 523.0,400.0 580.0,509.0 560.0,519.0 540.0,498.0 520.0,460.0 510.0,420.0 499.0,385.0" fill="#ffff00" opacity="0.95"/>
<rect x="500.0" y="375.7" width="1.5" height="4.6" fill="#e8e8a0"/><rect x="545.4" y="478.8" width="1.8" height="3.5" fill="#e8e8a0"/><rect x="518.9" y="451.5" width="1.8" height="2.5" fill="#e8e8a0"/><rect x="530.7" y="435.6" width="1.3" height="4.5" fill="#e8e8a0"/><rect x="538.4" y="454.3" width="1.6" height="4.6" fill="#1020d0"/><rect x="545.7" y="478.0" width="2.4" height="1.9" fill="#1020d0"/><rect x="534.4" y="433.1" width="1.6" height="3.4" fill="#2030c0"/><rect x="552.4" y="468.4" width="1.9" height="4.0" fill="#2030c0"/><rect x="517.4" y="397.9" width="2.0" height="3.3" fill="#e8e8a0"/><rect x="523.2" y="456.3" width="1.3" height="3.2" fill="#e8e8a0"/><rect x="565.5" y="493.5" width="1.7" height="3.3" fill="#e8e8a0"/><rect x="528.5" y="437.1" width="1.6" height="3.6" fill="#2030c0"/><rect x="544.9" y="444.9" width="1.9" height="1.8" fill="#e8e8a0"/><rect x="536.5" y="449.5" width="1.8" height="1.3" fill="#2030c0"/><rect x="555.0" y="470.4" width="2.4" height="2.5" fill="#2030c0"/><rect x="540.6" y="446.7" width="1.8" height="2.6" fill="#2030c0"/><rect x="549.7" y="493.0" width="2.1" height="1.9" fill="#1020d0"/><rect x="508.5" y="375.5" width="2.3" height="3.8" fill="#2030c0"/><rect x="500.7" y="371.0" width="2.0" height="3.5" fill="#2030c0"/><rect x="556.0" y="471.8" width="1.7" height="4.3" fill="#1020d0"/><rect x="543.5" y="456.5" width="1.6" height="3.5" fill="#2030c0"/><rect x="562.8" y="501.2" width="1.4" height="1.8" fill="#e8e8a0"/><rect x="527.8" y="472.9" width="1.5" height="4.3" fill="#1020d0"/><rect x="538.9" y="467.0" width="2.4" height="3.8" fill="#e8e8a0"/><rect x="543.0" y="453.6" width="1.3" height="1.4" fill="#2030c0"/><rect x="513.0" y="387.5" width="1.3" height="3.6" fill="#1020d0"/><rect x="552.4" y="470.7" width="1.9" height="2.6" fill="#2030c0"/><rect x="535.0" y="452.3" width="2.6" height="4.0" fill="#1020d0"/><rect x="522.1" y="408.5" width="1.7" height="3.5" fill="#1020d0"/><rect x="555.0" y="478.9" width="1.8" height="2.6" fill="#e8e8a0"/><rect x="552.0" y="499.0" width="1.5" height="1.6" fill="#e8e8a0"/><rect x="511.0" y="423.2" width="2.1" height="1.6" fill="#e8e8a0"/><rect x="546.9" y="447.8" width="1.3" height="3.7" fill="#1020d0"/><rect x="535.2" y="447.3" width="1.7" height="3.2" fill="#e8e8a0"/><rect x="557.4" y="507.2" width="2.0" height="2.0" fill="#2030c0"/><rect x="510.4" y="393.7" width="1.2" height="1.8" fill="#2030c0"/><rect x="564.2" y="503.5" width="2.2" height="2.3" fill="#1020d0"/><rect x="514.1" y="399.2" width="1.6" height="4.1" fill="#e8e8a0"/><rect x="551.7" y="470.6" width="2.5" height="2.3" fill="#1020d0"/><rect x="530.1" y="445.4" width="1.3" height="1.3" fill="#e8e8a0"/><rect x="529.1" y="413.8" width="1.4" height="3.3" fill="#e8e8a0"/><rect x="539.5" y="482.2" width="2.0" height="2.0" fill="#1020d0"/><rect x="517.3" y="430.4" width="1.7" height="1.8" fill="#2030c0"/><rect x="547.7" y="505.9" width="1.3" height="1.6" fill="#2030c0"/><rect x="513.6" y="432.7" width="1.8" height="1.5" fill="#e8e8a0"/><rect x="512.6" y="388.5" width="1.9" height="2.5" fill="#1020d0"/><rect x="562.9" y="495.7" width="1.6" height="2.2" fill="#e8e8a0"/><rect x="556.2" y="504.6" width="1.3" height="2.2" fill="#2030c0"/><rect x="551.1" y="460.6" width="2.4" height="2.4" fill="#2030c0"/><rect x="559.0" y="497.9" width="1.7" height="3.3" fill="#e8e8a0"/><rect x="531.7" y="450.6" width="1.4" height="3.9" fill="#1020d0"/><rect x="534.2" y="452.9" width="1.5" height="4.5" fill="#2030c0"/><rect x="514.5" y="432.3" width="2.4" height="4.6" fill="#2030c0"/><rect x="520.3" y="421.7" width="2.1" height="3.8" fill="#1020d0"/><rect x="525.6" y="405.2" width="2.6" height="3.4" fill="#1020d0"/><rect x="536.5" y="436.4" width="2.1" height="2.1" fill="#e8e8a0"/><rect x="562.4" y="513.8" width="1.5" height="3.3" fill="#1020d0"/><rect x="528.1" y="463.5" width="1.7" height="4.4" fill="#1020d0"/><rect x="501.4" y="387.4" width="1.3" height="3.0" fill="#1020d0"/><rect x="568.7" y="506.2" width="1.7" height="3.5" fill="#2030c0"/>
<polygon points="575,496 579,494 589,511 584,513" fill="#9a9a8a"/>
<polygon points="463.5,446 441,491 466,492.5" fill="#ffff00"/>
<path d="M462 446 L505 520 M462 446 L515 512 M462 446 L492 528 M462 446 L480 530 M462 446 L528 500 M462 446 L470 532" stroke="#e6e67a" stroke-width="1" opacity="0.85"/>
<polygon points="308.9,512 346,496 345,517 322.7,529" fill="#d6d648"/>
<path d="M312 514.5 L346 499.5 M315 518 L346 504 M318 522 L346 508.5 M321 526 L346 513" stroke="#8a8a5a" stroke-width="1"/>
<polygon points="322.7,529 345,517 345.5,548 323.3,562" fill="#b4b45a"/>
<polygon points="325,532 343.5,521.5 343.5,530 325,541" fill="#0a14f5"/><polygon points="325,545.5 343.5,534 343.5,543 325,554.5" fill="#0a14f5"/>
<polygon points="308.9,512 322.7,529 323.3,562 309.5,542" fill="#ffff00"/>
<rect x="456" y="432" width="12" height="9" fill="#8a1060"/><polygon points="457,441 467,441 462,449" fill="#e01010"/>
<rect x="388" y="488" width="3" height="8" fill="#ff5a00"/>
</g>
<g clip-path="url(#cr)">
<ellipse cx="656" cy="409" rx="5.8" ry="3.1" fill="none" stroke="#dcdc70" stroke-width="1.4" stroke-dasharray="2.4 2.2" transform="rotate(-12 656 409)" opacity="0.95"/><ellipse cx="656" cy="409" rx="11.5" ry="6.2" fill="none" stroke="#dcdc70" stroke-width="1.4" stroke-dasharray="2.4 2.2" transform="rotate(-12 656 409)" opacity="0.95"/><ellipse cx="656" cy="409" rx="17.2" ry="9.3" fill="none" stroke="#dcdc70" stroke-width="1.4" stroke-dasharray="2.4 2.2" transform="rotate(-12 656 409)" opacity="0.95"/><ellipse cx="656" cy="409" rx="23.0" ry="12.4" fill="none" stroke="#dcdc70" stroke-width="1.4" stroke-dasharray="2.4 2.2" transform="rotate(-12 656 409)" opacity="0.95"/><ellipse cx="656" cy="409" rx="28.7" ry="15.5" fill="none" stroke="#dcdc70" stroke-width="1.4" stroke-dasharray="2.4 2.2" transform="rotate(-12 656 409)" opacity="0.95"/><ellipse cx="656" cy="409" rx="34.5" ry="18.6" fill="none" stroke="#dcdc70" stroke-width="1.4" stroke-dasharray="2.4 2.2" transform="rotate(-12 656 409)" opacity="0.95"/><ellipse cx="656" cy="409" rx="40.2" ry="21.7" fill="none" stroke="#dcdc70" stroke-width="1.4" stroke-dasharray="2.4 2.2" transform="rotate(-12 656 409)" opacity="0.95"/><ellipse cx="656" cy="409" rx="46.0" ry="24.8" fill="none" stroke="#dcdc70" stroke-width="1.4" stroke-dasharray="2.4 2.2" transform="rotate(-12 656 409)" opacity="0.95"/><ellipse cx="656" cy="409" rx="51.7" ry="27.9" fill="none" stroke="#dcdc70" stroke-width="1.4" stroke-dasharray="2.4 2.2" transform="rotate(-12 656 409)" opacity="0.95"/><ellipse cx="656" cy="409" rx="57.5" ry="31.0" fill="none" stroke="#dcdc70" stroke-width="1.4" stroke-dasharray="2.4 2.2" transform="rotate(-12 656 409)" opacity="0.95"/><ellipse cx="656" cy="409" rx="63.2" ry="34.1" fill="none" stroke="#dcdc70" stroke-width="1.4" stroke-dasharray="2.4 2.2" transform="rotate(-12 656 409)" opacity="0.95"/><ellipse cx="656" cy="409" rx="69.0" ry="37.2" fill="none" stroke="#dcdc70" stroke-width="1.4" stroke-dasharray="2.4 2.2" transform="rotate(-12 656 409)" opacity="0.95"/>
<path d="M640.0 443.8V495.3M645.0 439.8V497.3M650.0 439.8V497.3M655.0 434.9V494.2M660.0 437.3V490.1M665.0 430.1V489.0M670.0 431.6V489.2M675.0 433.1V487.2M680.0 427.6V482.3M685.0 432.1V486.7M690.0 434.9V486.7M695.0 426.9V482.2M700.0 428.1V484.6" stroke="#ffff00" stroke-width="1.5" fill="none" opacity="0.8" stroke-dasharray="1.6 3.4"/>
<path d="M681 487 V462 Q682 448 691 440 M686 487 V466 M641 446 V468 M645 445 V470 M649.5 444 V466" stroke="#e0e060" stroke-width="1.6" fill="none"/>
<path d="M704.0 359.4V483.4M708.5 358.5V480.0M713.0 361.2V476.6M717.5 354.8V373.4M717.5 379.4V479.6M722.0 357.0V479.3M726.5 354.3V476.2M731.0 352.9V473.2M735.5 353.6V460.1M735.5 468.3V473.2M740.0 350.2V406.1M740.0 413.4V475.6M744.5 349.2V476.4M749.0 348.9V353.5M749.0 361.1V474.7M753.5 349.9V474.6M758.0 347.4V468.7M762.5 348.1V469.5M767.0 345.7V461.2M767.0 470.7V470.7M771.5 347.2V468.0M776.0 348.0V409.5M776.0 413.5V470.1M780.5 345.0V470.2M785.0 342.3V467.0M789.5 340.9V467.4M794.0 341.0V464.7M798.5 342.5V354.1M798.5 358.3V464.2M803.0 342.2V463.6M807.5 338.5V458.9M807.5 462.0V462.0M812.0 336.2V463.1M816.5 338.2V462.6M821.0 338.9V462.8M825.5 336.6V458.2M830.0 334.0V458.8M834.5 333.0V459.1M839.0 334.1V458.0M843.5 333.0V453.5M848.0 328.8V455.8" stroke="#ffff00" stroke-width="2.0" fill="none" opacity="1.0"/>
<polygon points="589.0,335.0 827.0,283.3 838.5,292.0 850.0,318.0 846.0,334.0 790.0,344.0 700.0,361.0 640.0,373.0 610.0,380.0 593.0,382.0" fill="#ffff00"/>
<rect x="668.0" y="320.6" width="1.1" height="1.5" fill="#223ec0"/><rect x="727.6" y="345.4" width="1.6" height="4.0" fill="#3a7a2a"/><rect x="648.0" y="369.9" width="1.4" height="2.8" fill="#1a2acc"/><rect x="799.4" y="313.5" width="1.6" height="1.8" fill="#223ec0"/><rect x="798.5" y="315.5" width="1.2" height="1.5" fill="#1a2acc"/><rect x="610.6" y="357.2" width="1.7" height="1.9" fill="#3a7a2a"/><rect x="745.3" y="314.8" width="1.0" height="2.6" fill="#3a7a2a"/><rect x="678.2" y="345.4" width="1.2" height="3.5" fill="#223ec0"/><rect x="757.5" y="330.0" width="1.9" height="3.6" fill="#1a2acc"/><rect x="633.1" y="340.0" width="1.8" height="3.3" fill="#1a2acc"/><rect x="589.3" y="337.4" width="1.1" height="4.4" fill="#1a2acc"/><rect x="679.8" y="347.3" width="1.8" height="3.9" fill="#1a2acc"/><rect x="696.8" y="334.7" width="1.2" height="2.8" fill="#3a7a2a"/><rect x="732.0" y="342.2" width="1.7" height="3.1" fill="#3a7a2a"/><rect x="807.0" y="320.8" width="1.2" height="4.2" fill="#3a7a2a"/><rect x="635.5" y="357.9" width="2.0" height="4.6" fill="#1a2acc"/><rect x="757.6" y="319.4" width="1.5" height="4.5" fill="#1a2acc"/><rect x="826.5" y="330.1" width="1.2" height="2.4" fill="#1a2acc"/><rect x="663.3" y="366.9" width="1.6" height="2.3" fill="#3a7a2a"/><rect x="596.1" y="360.0" width="2.0" height="2.9" fill="#223ec0"/><rect x="771.1" y="298.5" width="1.6" height="3.2" fill="#1a2acc"/><rect x="763.5" y="305.5" width="1.4" height="1.3" fill="#1a2acc"/><rect x="624.8" y="341.6" width="2.0" height="2.5" fill="#1a2acc"/><rect x="704.9" y="358.9" width="1.2" height="4.1" fill="#1a2acc"/><rect x="808.6" y="287.6" width="1.6" height="1.3" fill="#1a2acc"/><rect x="796.1" y="309.1" width="2.0" height="4.5" fill="#223ec0"/><rect x="678.6" y="335.7" width="1.1" height="4.3" fill="#3a7a2a"/><rect x="641.3" y="362.7" width="1.1" height="2.2" fill="#3a7a2a"/><rect x="608.7" y="341.3" width="1.4" height="1.3" fill="#3a7a2a"/><rect x="814.9" y="333.6" width="1.1" height="2.1" fill="#3a7a2a"/><rect x="799.5" y="322.6" width="1.1" height="4.3" fill="#3a7a2a"/><rect x="779.9" y="316.9" width="1.3" height="1.2" fill="#1a2acc"/><rect x="729.5" y="319.7" width="1.5" height="1.2" fill="#223ec0"/><rect x="717.3" y="320.6" width="1.3" height="1.2" fill="#3a7a2a"/><rect x="786.9" y="298.8" width="1.3" height="4.1" fill="#223ec0"/><rect x="594.1" y="370.1" width="1.4" height="2.7" fill="#223ec0"/><rect x="807.3" y="334.2" width="2.2" height="4.5" fill="#223ec0"/><rect x="729.2" y="338.4" width="2.1" height="3.3" fill="#1a2acc"/><rect x="632.0" y="338.9" width="1.2" height="3.9" fill="#3a7a2a"/><rect x="618.4" y="345.9" width="2.0" height="2.7" fill="#3a7a2a"/><rect x="647.6" y="355.7" width="2.1" height="4.0" fill="#3a7a2a"/><rect x="839.7" y="323.7" width="1.6" height="4.6" fill="#223ec0"/><rect x="833.0" y="335.4" width="1.0" height="2.8" fill="#3a7a2a"/><rect x="633.6" y="340.5" width="1.5" height="2.8" fill="#3a7a2a"/><rect x="621.8" y="337.9" width="1.6" height="1.7" fill="#3a7a2a"/><rect x="696.1" y="330.0" width="1.5" height="3.3" fill="#1a2acc"/><rect x="805.4" y="305.8" width="1.3" height="2.8" fill="#223ec0"/><rect x="714.9" y="352.7" width="1.8" height="2.1" fill="#223ec0"/><rect x="643.7" y="355.4" width="2.0" height="1.2" fill="#1a2acc"/><rect x="610.2" y="369.6" width="1.7" height="2.7" fill="#3a7a2a"/><rect x="712.4" y="357.0" width="1.9" height="3.0" fill="#3a7a2a"/><rect x="837.2" y="300.5" width="1.9" height="1.4" fill="#1a2acc"/><rect x="807.7" y="287.6" width="1.1" height="3.8" fill="#3a7a2a"/><rect x="601.4" y="341.0" width="1.8" height="4.3" fill="#1a2acc"/><rect x="684.9" y="346.4" width="1.1" height="4.5" fill="#223ec0"/><rect x="775.8" y="323.3" width="2.1" height="1.6" fill="#3a7a2a"/><rect x="766.6" y="337.4" width="1.1" height="1.0" fill="#3a7a2a"/><rect x="803.1" y="341.6" width="1.2" height="4.1" fill="#223ec0"/><rect x="780.0" y="343.9" width="1.4" height="2.3" fill="#1a2acc"/><rect x="810.7" y="337.5" width="1.1" height="2.8" fill="#3a7a2a"/><rect x="749.3" y="346.3" width="2.0" height="3.4" fill="#3a7a2a"/><rect x="605.3" y="347.0" width="1.4" height="2.9" fill="#3a7a2a"/><rect x="674.0" y="318.0" width="2.2" height="2.5" fill="#3a7a2a"/><rect x="605.9" y="369.7" width="1.7" height="3.9" fill="#223ec0"/><rect x="621.5" y="342.3" width="1.5" height="4.1" fill="#3a7a2a"/><rect x="751.3" y="350.8" width="1.7" height="2.2" fill="#3a7a2a"/><rect x="822.7" y="312.1" width="1.6" height="3.0" fill="#3a7a2a"/><rect x="771.1" y="318.6" width="1.5" height="4.4" fill="#223ec0"/><rect x="670.1" y="320.6" width="1.4" height="2.0" fill="#1a2acc"/><rect x="791.3" y="298.9" width="1.7" height="3.4" fill="#223ec0"/><rect x="710.0" y="321.1" width="1.4" height="4.7" fill="#1a2acc"/><rect x="845.0" y="321.3" width="1.1" height="3.6" fill="#3a7a2a"/><rect x="707.5" y="325.5" width="2.0" height="4.7" fill="#223ec0"/><rect x="829.5" y="308.3" width="2.0" height="1.3" fill="#223ec0"/><rect x="800.5" y="330.9" width="1.6" height="3.6" fill="#1a2acc"/><rect x="776.2" y="335.3" width="1.0" height="4.0" fill="#1a2acc"/><rect x="718.3" y="327.6" width="1.3" height="3.5" fill="#1a2acc"/><rect x="619.4" y="354.5" width="1.8" height="2.3" fill="#223ec0"/><rect x="621.9" y="334.2" width="2.0" height="4.3" fill="#223ec0"/><rect x="821.0" y="317.8" width="1.9" height="2.4" fill="#1a2acc"/><rect x="828.8" y="293.2" width="1.1" height="4.8" fill="#223ec0"/><rect x="716.3" y="329.9" width="2.1" height="3.7" fill="#3a7a2a"/><rect x="698.6" y="319.6" width="2.1" height="2.2" fill="#1a2acc"/><rect x="596.7" y="343.4" width="2.0" height="1.2" fill="#223ec0"/><rect x="720.3" y="332.3" width="1.1" height="1.8" fill="#3a7a2a"/><rect x="826.5" y="289.9" width="1.4" height="1.2" fill="#3a7a2a"/><rect x="601.1" y="376.9" width="1.3" height="4.3" fill="#1a2acc"/><rect x="614.2" y="336.0" width="1.1" height="2.7" fill="#223ec0"/><rect x="657.5" y="364.5" width="1.3" height="2.5" fill="#3a7a2a"/><rect x="589.9" y="338.0" width="1.6" height="3.7" fill="#1a2acc"/><rect x="770.3" y="305.4" width="1.2" height="2.9" fill="#3a7a2a"/><rect x="721.9" y="317.2" width="2.0" height="3.0" fill="#1a2acc"/><rect x="819.0" y="321.8" width="2.2" height="1.7" fill="#223ec0"/><rect x="706.6" y="338.7" width="2.2" height="1.9" fill="#3a7a2a"/><rect x="610.8" y="362.6" width="1.7" height="2.8" fill="#1a2acc"/><rect x="741.8" y="327.9" width="1.5" height="3.0" fill="#223ec0"/><rect x="800.0" y="331.5" width="2.1" height="4.2" fill="#223ec0"/><rect x="799.3" y="304.6" width="1.4" height="1.2" fill="#3a7a2a"/><rect x="664.6" y="325.9" width="2.0" height="4.7" fill="#1a2acc"/><rect x="659.9" y="344.2" width="1.1" height="3.6" fill="#223ec0"/><rect x="708.4" y="326.8" width="1.1" height="4.0" fill="#223ec0"/><rect x="624.8" y="333.5" width="1.8" height="1.4" fill="#1a2acc"/><rect x="815.3" y="337.9" width="1.2" height="2.1" fill="#223ec0"/><rect x="741.7" y="347.1" width="1.8" height="1.2" fill="#1a2acc"/><rect x="784.6" y="296.7" width="1.1" height="1.6" fill="#1a2acc"/><rect x="734.9" y="323.7" width="2.1" height="1.8" fill="#1a2acc"/><rect x="644.3" y="324.0" width="1.1" height="4.2" fill="#3a7a2a"/><rect x="739.4" y="307.6" width="1.7" height="4.5" fill="#223ec0"/><rect x="727.0" y="355.2" width="1.7" height="2.0" fill="#1a2acc"/><rect x="656.4" y="369.1" width="1.8" height="4.4" fill="#3a7a2a"/><rect x="633.0" y="338.2" width="1.0" height="4.1" fill="#1a2acc"/><rect x="599.4" y="343.5" width="1.3" height="1.4" fill="#223ec0"/><rect x="626.1" y="357.8" width="1.3" height="2.4" fill="#1a2acc"/><rect x="740.9" y="315.3" width="1.5" height="3.2" fill="#1a2acc"/><rect x="847.3" y="322.0" width="1.2" height="4.4" fill="#223ec0"/><rect x="731.8" y="334.4" width="1.7" height="3.1" fill="#223ec0"/><rect x="633.9" y="360.9" width="1.7" height="2.1" fill="#223ec0"/><rect x="836.1" y="312.2" width="1.7" height="3.0" fill="#3a7a2a"/><rect x="748.6" y="351.8" width="1.8" height="4.2" fill="#1a2acc"/><rect x="756.7" y="342.5" width="1.7" height="2.8" fill="#223ec0"/><rect x="625.8" y="333.3" width="1.6" height="3.0" fill="#3a7a2a"/><rect x="780.4" y="341.1" width="2.2" height="3.4" fill="#223ec0"/><rect x="785.8" y="303.9" width="1.4" height="3.9" fill="#3a7a2a"/><rect x="845.3" y="332.2" width="2.2" height="3.4" fill="#3a7a2a"/><rect x="671.7" y="357.6" width="2.0" height="1.9" fill="#3a7a2a"/><rect x="659.1" y="368.2" width="1.7" height="1.2" fill="#3a7a2a"/><rect x="842.1" y="330.8" width="1.2" height="3.0" fill="#3a7a2a"/><rect x="629.1" y="363.3" width="1.2" height="3.2" fill="#1a2acc"/><rect x="706.0" y="346.2" width="1.6" height="1.6" fill="#3a7a2a"/><rect x="589.9" y="339.0" width="1.5" height="1.7" fill="#223ec0"/><rect x="767.2" y="317.0" width="1.6" height="3.3" fill="#223ec0"/><rect x="717.9" y="327.0" width="1.3" height="1.9" fill="#3a7a2a"/><rect x="746.0" y="310.0" width="1.7" height="2.8" fill="#1a2acc"/><rect x="731.6" y="316.4" width="1.3" height="3.7" fill="#3a7a2a"/><rect x="747.6" y="344.7" width="1.5" height="4.8" fill="#3a7a2a"/><rect x="693.7" y="340.3" width="1.6" height="3.1" fill="#223ec0"/><rect x="621.2" y="335.3" width="2.0" height="4.5" fill="#1a2acc"/><rect x="840.1" y="315.6" width="1.8" height="2.5" fill="#3a7a2a"/><rect x="764.7" y="307.0" width="1.4" height="2.8" fill="#1a2acc"/><rect x="697.2" y="325.5" width="1.3" height="1.6" fill="#3a7a2a"/><rect x="660.4" y="341.3" width="1.1" height="1.9" fill="#1a2acc"/><rect x="675.4" y="322.6" width="1.1" height="1.0" fill="#223ec0"/><rect x="752.6" y="308.1" width="1.9" height="4.8" fill="#1a2acc"/><rect x="596.7" y="371.4" width="2.0" height="3.3" fill="#3a7a2a"/><rect x="627.4" y="350.4" width="2.2" height="3.4" fill="#3a7a2a"/><rect x="776.2" y="302.9" width="1.9" height="2.7" fill="#223ec0"/><rect x="653.8" y="360.3" width="1.1" height="1.5" fill="#223ec0"/><rect x="647.2" y="344.9" width="1.3" height="1.0" fill="#3a7a2a"/><rect x="835.6" y="328.0" width="1.9" height="2.9" fill="#3a7a2a"/><rect x="657.9" y="323.3" width="1.9" height="2.3" fill="#3a7a2a"/><rect x="671.7" y="335.1" width="1.4" height="2.5" fill="#3a7a2a"/><rect x="780.1" y="308.3" width="1.5" height="2.0" fill="#223ec0"/><rect x="724.9" y="353.8" width="1.6" height="3.0" fill="#3a7a2a"/><rect x="717.4" y="308.3" width="1.4" height="4.6" fill="#3a7a2a"/><rect x="784.7" y="296.8" width="1.7" height="2.2" fill="#223ec0"/><rect x="592.3" y="355.7" width="1.8" height="1.2" fill="#3a7a2a"/><rect x="650.1" y="333.5" width="2.0" height="3.3" fill="#223ec0"/><rect x="789.9" y="311.7" width="1.9" height="2.9" fill="#3a7a2a"/><rect x="755.0" y="339.0" width="1.8" height="2.6" fill="#223ec0"/><rect x="610.8" y="368.5" width="2.1" height="4.5" fill="#223ec0"/><rect x="761.5" y="307.8" width="1.7" height="3.1" fill="#223ec0"/><rect x="634.0" y="372.3" width="1.0" height="1.5" fill="#3a7a2a"/><rect x="670.9" y="327.5" width="1.5" height="3.4" fill="#1a2acc"/><rect x="706.1" y="327.4" width="1.8" height="2.2" fill="#3a7a2a"/><rect x="698.1" y="338.3" width="1.6" height="2.4" fill="#1a2acc"/><rect x="609.1" y="350.5" width="2.0" height="3.5" fill="#1a2acc"/><rect x="635.5" y="333.1" width="1.1" height="2.5" fill="#3a7a2a"/><rect x="675.9" y="356.3" width="1.8" height="4.6" fill="#3a7a2a"/><rect x="740.6" y="341.2" width="1.9" height="2.6" fill="#3a7a2a"/><rect x="777.6" y="339.4" width="2.0" height="1.7" fill="#3a7a2a"/><rect x="815.4" y="319.6" width="1.6" height="4.8" fill="#3a7a2a"/><rect x="812.1" y="337.7" width="1.3" height="2.8" fill="#3a7a2a"/><rect x="600.2" y="337.7" width="1.5" height="3.9" fill="#1a2acc"/><rect x="747.8" y="348.3" width="1.3" height="4.5" fill="#3a7a2a"/><rect x="640.0" y="326.0" width="1.5" height="1.3" fill="#1a2acc"/><rect x="687.8" y="316.3" width="1.4" height="1.6" fill="#3a7a2a"/><rect x="761.4" y="311.9" width="1.9" height="2.0" fill="#1a2acc"/><rect x="831.8" y="324.1" width="1.7" height="1.3" fill="#3a7a2a"/><rect x="736.9" y="322.8" width="1.4" height="4.7" fill="#3a7a2a"/><rect x="762.9" y="306.5" width="1.7" height="2.6" fill="#223ec0"/><rect x="706.2" y="310.1" width="1.4" height="4.7" fill="#3a7a2a"/><rect x="752.7" y="320.5" width="1.3" height="2.6" fill="#223ec0"/><rect x="625.6" y="331.7" width="1.4" height="4.0" fill="#223ec0"/><rect x="768.7" y="313.8" width="1.3" height="3.6" fill="#1a2acc"/><rect x="608.4" y="375.6" width="2.1" height="4.8" fill="#223ec0"/><rect x="833.9" y="328.4" width="2.2" height="3.0" fill="#1a2acc"/><rect x="788.1" y="330.6" width="1.3" height="4.0" fill="#223ec0"/><rect x="785.2" y="316.7" width="1.6" height="2.4" fill="#223ec0"/><rect x="598.6" y="378.2" width="2.1" height="3.1" fill="#1a2acc"/><rect x="729.8" y="350.6" width="1.1" height="2.7" fill="#223ec0"/><rect x="824.7" y="327.7" width="1.8" height="4.2" fill="#3a7a2a"/><rect x="700.7" y="335.2" width="1.1" height="1.9" fill="#223ec0"/><rect x="675.4" y="334.0" width="1.6" height="3.9" fill="#3a7a2a"/><rect x="692.3" y="357.8" width="1.0" height="2.8" fill="#3a7a2a"/><rect x="749.6" y="328.3" width="2.1" height="1.2" fill="#223ec0"/><rect x="793.8" y="311.7" width="1.1" height="4.4" fill="#3a7a2a"/><rect x="640.5" y="361.7" width="1.6" height="1.1" fill="#223ec0"/><rect x="774.3" y="321.8" width="2.1" height="2.8" fill="#1a2acc"/><rect x="636.5" y="333.5" width="1.6" height="1.6" fill="#3a7a2a"/><rect x="831.1" y="297.4" width="1.1" height="3.1" fill="#223ec0"/><rect x="838.8" y="311.3" width="1.1" height="3.6" fill="#1a2acc"/><rect x="619.5" y="356.8" width="1.2" height="4.1" fill="#223ec0"/><rect x="636.2" y="357.5" width="2.2" height="3.8" fill="#223ec0"/><rect x="753.4" y="306.0" width="1.1" height="4.2" fill="#3a7a2a"/><rect x="772.0" y="303.7" width="1.9" height="1.0" fill="#1a2acc"/><rect x="801.8" y="340.1" width="1.9" height="3.2" fill="#3a7a2a"/><rect x="709.5" y="327.3" width="1.8" height="4.0" fill="#223ec0"/><rect x="703.5" y="332.2" width="2.0" height="4.0" fill="#3a7a2a"/><rect x="745.9" y="344.5" width="2.2" height="3.1" fill="#223ec0"/><rect x="625.7" y="366.3" width="1.8" height="4.7" fill="#1a2acc"/><rect x="666.5" y="364.6" width="1.2" height="1.1" fill="#3a7a2a"/><rect x="758.0" y="343.8" width="1.6" height="4.8" fill="#3a7a2a"/><rect x="735.3" y="334.9" width="1.4" height="1.9" fill="#1a2acc"/><rect x="737.9" y="309.2" width="1.6" height="4.8" fill="#3a7a2a"/><rect x="639.3" y="326.2" width="1.4" height="4.8" fill="#223ec0"/><rect x="721.0" y="320.5" width="1.8" height="3.4" fill="#3a7a2a"/><rect x="795.8" y="318.7" width="1.3" height="3.4" fill="#1a2acc"/><rect x="787.6" y="335.7" width="2.0" height="2.9" fill="#3a7a2a"/><rect x="617.9" y="369.4" width="1.4" height="1.0" fill="#3a7a2a"/><rect x="688.2" y="359.8" width="1.5" height="4.7" fill="#1a2acc"/><rect x="750.2" y="345.4" width="1.9" height="2.8" fill="#1a2acc"/><rect x="791.9" y="333.3" width="1.9" height="3.4" fill="#223ec0"/><rect x="741.9" y="322.0" width="1.5" height="3.8" fill="#223ec0"/><rect x="601.7" y="358.2" width="1.1" height="1.4" fill="#3a7a2a"/><rect x="646.3" y="342.0" width="1.7" height="2.5" fill="#3a7a2a"/><rect x="794.6" y="338.4" width="2.1" height="1.0" fill="#3a7a2a"/><rect x="802.7" y="290.8" width="1.5" height="2.4" fill="#223ec0"/><rect x="751.1" y="302.7" width="1.6" height="1.1" fill="#223ec0"/><rect x="692.9" y="352.5" width="1.7" height="2.9" fill="#3a7a2a"/><rect x="714.6" y="342.2" width="1.2" height="2.5" fill="#223ec0"/>
<rect x="611.0" y="365.3" width="2.5" height="5.4" fill="#1020d0"/><rect x="638.0" y="337.3" width="1.4" height="4.8" fill="#1020d0"/><rect x="598.8" y="359.9" width="2.0" height="2.1" fill="#2030c0"/><rect x="630.1" y="374.0" width="1.5" height="3.2" fill="#2030c0"/><rect x="617.2" y="339.9" width="1.5" height="1.8" fill="#1020d0"/><rect x="603.5" y="352.7" width="2.1" height="2.2" fill="#2030c0"/><rect x="596.5" y="380.1" width="2.1" height="1.2" fill="#2030c0"/><rect x="610.8" y="336.9" width="2.3" height="6.7" fill="#2030c0"/><rect x="613.6" y="339.7" width="2.5" height="7.0" fill="#2030c0"/><rect x="639.8" y="352.0" width="2.5" height="3.4" fill="#1020d0"/><rect x="607.0" y="367.7" width="1.7" height="2.3" fill="#2030c0"/><rect x="610.8" y="343.1" width="1.2" height="4.4" fill="#1020d0"/><rect x="626.0" y="365.1" width="2.2" height="5.8" fill="#2030c0"/><rect x="604.3" y="337.5" width="1.9" height="3.3" fill="#2030c0"/><rect x="599.7" y="361.1" width="1.8" height="5.7" fill="#2030c0"/><rect x="606.7" y="378.2" width="1.7" height="3.4" fill="#2030c0"/><rect x="620.3" y="360.7" width="1.9" height="4.5" fill="#2030c0"/><rect x="602.3" y="373.8" width="1.9" height="7.5" fill="#1020d0"/><rect x="639.3" y="329.0" width="1.7" height="5.1" fill="#1020d0"/><rect x="619.3" y="376.4" width="1.4" height="2.7" fill="#1020d0"/><rect x="613.8" y="354.7" width="1.6" height="2.2" fill="#1020d0"/><rect x="638.8" y="332.2" width="2.1" height="6.1" fill="#2030c0"/><rect x="604.3" y="379.4" width="1.6" height="5.7" fill="#2030c0"/><rect x="608.7" y="352.4" width="1.5" height="6.9" fill="#1020d0"/><rect x="639.0" y="346.8" width="1.9" height="6.6" fill="#1020d0"/><rect x="627.1" y="356.3" width="2.0" height="7.0" fill="#1020d0"/><rect x="596.6" y="337.4" width="1.8" height="6.4" fill="#2030c0"/><rect x="599.2" y="359.2" width="2.2" height="1.8" fill="#1020d0"/><rect x="636.3" y="358.6" width="2.0" height="1.3" fill="#1020d0"/><rect x="637.6" y="361.9" width="2.5" height="2.0" fill="#2030c0"/><rect x="598.6" y="368.4" width="2.4" height="6.8" fill="#1020d0"/><rect x="637.7" y="334.5" width="1.8" height="1.8" fill="#1020d0"/><rect x="622.0" y="350.1" width="2.0" height="2.0" fill="#1020d0"/><rect x="628.4" y="366.4" width="1.4" height="5.3" fill="#1020d0"/><rect x="592.9" y="356.0" width="1.3" height="7.1" fill="#2030c0"/><rect x="606.1" y="346.3" width="1.5" height="6.1" fill="#2030c0"/><rect x="606.8" y="353.5" width="2.1" height="5.3" fill="#1020d0"/><rect x="613.0" y="359.0" width="1.6" height="3.9" fill="#2030c0"/><rect x="593.3" y="352.0" width="1.6" height="3.1" fill="#2030c0"/><rect x="590.4" y="345.9" width="1.7" height="2.6" fill="#2030c0"/><rect x="623.6" y="368.8" width="1.4" height="7.3" fill="#1020d0"/><rect x="595.8" y="337.3" width="1.6" height="4.6" fill="#1020d0"/><rect x="631.6" y="374.3" width="1.2" height="1.4" fill="#2030c0"/><rect x="598.3" y="345.0" width="1.7" height="5.2" fill="#1020d0"/><rect x="633.6" y="338.6" width="1.6" height="2.4" fill="#2030c0"/><rect x="594.7" y="351.2" width="1.5" height="2.8" fill="#1020d0"/><rect x="625.4" y="367.5" width="1.7" height="7.7" fill="#1020d0"/><rect x="615.9" y="349.2" width="1.4" height="3.0" fill="#1020d0"/><rect x="639.9" y="371.9" width="1.5" height="7.7" fill="#1020d0"/><rect x="590.9" y="338.4" width="2.5" height="6.5" fill="#2030c0"/><rect x="636.8" y="343.4" width="2.3" height="4.8" fill="#2030c0"/><rect x="593.5" y="377.0" width="2.2" height="1.2" fill="#1020d0"/><rect x="597.9" y="346.2" width="1.6" height="1.5" fill="#2030c0"/><rect x="621.3" y="366.8" width="1.8" height="6.5" fill="#1020d0"/><rect x="592.1" y="341.5" width="2.3" height="3.1" fill="#1020d0"/><rect x="620.7" y="354.6" width="2.4" height="3.4" fill="#2030c0"/><rect x="611.4" y="374.8" width="2.2" height="4.7" fill="#2030c0"/><rect x="616.8" y="336.5" width="2.3" height="7.0" fill="#1020d0"/><rect x="613.6" y="363.8" width="2.5" height="4.5" fill="#2030c0"/><rect x="625.7" y="358.2" width="1.7" height="3.3" fill="#2030c0"/><rect x="592.5" y="358.4" width="2.2" height="2.6" fill="#1020d0"/><rect x="593.4" y="343.4" width="1.6" height="6.3" fill="#2030c0"/><rect x="637.8" y="370.7" width="1.4" height="4.1" fill="#2030c0"/><rect x="621.2" y="375.6" width="1.5" height="3.9" fill="#2030c0"/><rect x="621.8" y="365.4" width="2.0" height="5.0" fill="#1020d0"/><rect x="626.4" y="367.5" width="1.3" height="3.9" fill="#2030c0"/><rect x="634.4" y="329.6" width="1.5" height="3.5" fill="#1020d0"/><rect x="621.4" y="350.6" width="1.4" height="1.5" fill="#2030c0"/><rect x="620.2" y="354.2" width="1.9" height="3.9" fill="#1020d0"/><rect x="625.2" y="352.1" width="2.3" height="6.5" fill="#1020d0"/><rect x="611.0" y="343.3" width="2.3" height="1.8" fill="#1020d0"/><rect x="625.4" y="345.9" width="2.2" height="3.5" fill="#1020d0"/><rect x="600.8" y="336.1" width="1.7" height="6.1" fill="#1020d0"/><rect x="635.3" y="372.6" width="2.0" height="7.7" fill="#1020d0"/><rect x="594.1" y="376.9" width="2.2" height="4.3" fill="#2030c0"/><rect x="619.1" y="375.1" width="2.4" height="3.0" fill="#2030c0"/><rect x="593.3" y="348.5" width="2.0" height="3.5" fill="#2030c0"/><rect x="592.2" y="360.0" width="2.5" height="3.6" fill="#2030c0"/><rect x="607.9" y="377.3" width="1.9" height="6.5" fill="#1020d0"/><rect x="636.0" y="335.1" width="2.4" height="2.8" fill="#2030c0"/><rect x="619.6" y="363.1" width="1.2" height="3.6" fill="#2030c0"/><rect x="637.4" y="357.7" width="2.2" height="6.6" fill="#1020d0"/><rect x="613.7" y="361.3" width="1.7" height="3.0" fill="#2030c0"/><rect x="605.8" y="354.1" width="2.4" height="4.5" fill="#1020d0"/><rect x="626.8" y="338.4" width="1.9" height="1.3" fill="#1020d0"/><rect x="631.3" y="352.1" width="1.3" height="6.0" fill="#1020d0"/><rect x="595.2" y="379.2" width="2.6" height="7.2" fill="#1020d0"/><rect x="601.5" y="367.9" width="1.8" height="3.8" fill="#2030c0"/><rect x="593.1" y="357.8" width="1.7" height="1.4" fill="#1020d0"/><rect x="610.6" y="358.5" width="2.5" height="5.0" fill="#1020d0"/>
<rect x="649.7" y="357.6" width="1.7" height="2.2" fill="#2030c0"/><rect x="649.7" y="361.1" width="1.9" height="1.0" fill="#1020d0"/><rect x="641.0" y="371.6" width="1.8" height="1.7" fill="#1020d0"/><rect x="701.0" y="349.3" width="1.4" height="1.4" fill="#1a2acc"/><rect x="807.2" y="334.4" width="1.9" height="1.1" fill="#1020d0"/><rect x="597.8" y="362.6" width="1.9" height="2.4" fill="#1a2acc"/><rect x="734.0" y="345.4" width="1.8" height="2.4" fill="#2030c0"/><rect x="810.3" y="328.8" width="1.7" height="2.5" fill="#2030c0"/><rect x="711.8" y="341.6" width="1.5" height="3.3" fill="#1a2acc"/><rect x="691.3" y="342.7" width="1.0" height="1.8" fill="#2030c0"/><rect x="745.9" y="345.4" width="1.5" height="4.8" fill="#1020d0"/><rect x="736.8" y="342.0" width="1.7" height="4.3" fill="#1020d0"/><rect x="818.0" y="328.5" width="1.2" height="2.2" fill="#2030c0"/><rect x="694.2" y="343.6" width="1.5" height="5.1" fill="#1a2acc"/><rect x="644.6" y="349.7" width="1.8" height="1.5" fill="#1a2acc"/><rect x="777.8" y="325.8" width="1.4" height="3.5" fill="#2030c0"/><rect x="721.0" y="352.2" width="1.3" height="3.1" fill="#1a2acc"/><rect x="747.5" y="347.8" width="1.3" height="1.7" fill="#2030c0"/><rect x="826.1" y="334.0" width="1.6" height="2.5" fill="#1020d0"/><rect x="718.6" y="351.0" width="1.3" height="2.7" fill="#1a2acc"/><rect x="728.2" y="340.1" width="1.3" height="2.1" fill="#2030c0"/><rect x="691.0" y="362.0" width="1.7" height="1.4" fill="#1a2acc"/><rect x="776.7" y="341.2" width="1.1" height="3.3" fill="#2030c0"/><rect x="785.8" y="338.1" width="1.0" height="3.2" fill="#1020d0"/><rect x="691.9" y="342.0" width="1.7" height="1.9" fill="#1a2acc"/><rect x="609.5" y="376.1" width="1.2" height="1.5" fill="#1a2acc"/><rect x="613.1" y="367.4" width="1.3" height="5.0" fill="#1020d0"/><rect x="765.3" y="328.4" width="2.0" height="2.2" fill="#2030c0"/><rect x="758.5" y="333.1" width="1.7" height="3.4" fill="#1020d0"/><rect x="727.5" y="334.8" width="2.0" height="2.8" fill="#1020d0"/><rect x="826.6" y="322.1" width="1.1" height="1.4" fill="#1a2acc"/><rect x="831.6" y="320.2" width="1.3" height="2.8" fill="#2030c0"/><rect x="637.0" y="358.3" width="1.6" height="5.1" fill="#1020d0"/><rect x="761.6" y="338.2" width="1.9" height="3.1" fill="#2030c0"/><rect x="785.2" y="340.9" width="1.7" height="3.2" fill="#1020d0"/><rect x="684.1" y="343.3" width="1.0" height="4.8" fill="#1020d0"/><rect x="720.9" y="338.8" width="1.5" height="2.8" fill="#1020d0"/><rect x="759.4" y="331.4" width="1.2" height="2.0" fill="#2030c0"/><rect x="822.1" y="330.7" width="1.1" height="3.2" fill="#1a2acc"/><rect x="737.5" y="349.3" width="1.8" height="2.3" fill="#1a2acc"/><rect x="627.0" y="361.3" width="1.9" height="1.3" fill="#1020d0"/><rect x="776.2" y="329.7" width="1.8" height="3.1" fill="#1a2acc"/><rect x="781.8" y="344.6" width="1.9" height="4.2" fill="#1a2acc"/><rect x="678.1" y="350.9" width="1.1" height="3.9" fill="#2030c0"/><rect x="785.8" y="330.4" width="1.7" height="4.3" fill="#2030c0"/><rect x="617.0" y="375.4" width="1.3" height="2.1" fill="#1a2acc"/><rect x="786.0" y="332.2" width="1.0" height="3.0" fill="#1a2acc"/><rect x="659.7" y="357.0" width="1.4" height="3.1" fill="#2030c0"/><rect x="757.3" y="349.6" width="1.8" height="3.6" fill="#1a2acc"/><rect x="630.9" y="368.8" width="1.4" height="4.9" fill="#1020d0"/><rect x="782.8" y="342.2" width="1.9" height="1.9" fill="#2030c0"/><rect x="830.3" y="330.5" width="1.7" height="4.2" fill="#1a2acc"/><rect x="714.2" y="343.3" width="1.0" height="3.6" fill="#1020d0"/><rect x="823.9" y="335.9" width="1.6" height="1.3" fill="#1020d0"/><rect x="626.0" y="358.4" width="1.5" height="3.0" fill="#1020d0"/><rect x="817.0" y="338.8" width="1.6" height="4.2" fill="#1a2acc"/><rect x="758.7" y="342.2" width="1.8" height="2.2" fill="#2030c0"/><rect x="745.3" y="340.8" width="1.8" height="5.1" fill="#1020d0"/><rect x="842.2" y="318.6" width="1.8" height="2.5" fill="#1020d0"/><rect x="708.9" y="338.7" width="1.8" height="4.3" fill="#2030c0"/><rect x="776.7" y="331.7" width="1.9" height="3.1" fill="#2030c0"/><rect x="616.2" y="371.5" width="1.7" height="4.0" fill="#2030c0"/><rect x="696.7" y="353.0" width="1.9" height="1.4" fill="#1a2acc"/><rect x="596.4" y="372.4" width="1.4" height="2.5" fill="#1a2acc"/><rect x="600.3" y="376.5" width="1.1" height="1.6" fill="#2030c0"/><rect x="725.3" y="340.2" width="1.9" height="3.6" fill="#1020d0"/><rect x="806.4" y="338.4" width="1.0" height="2.5" fill="#2030c0"/><rect x="831.4" y="323.7" width="1.7" height="2.5" fill="#1020d0"/><rect x="606.5" y="375.0" width="1.7" height="1.1" fill="#2030c0"/><rect x="829.7" y="323.6" width="1.2" height="2.6" fill="#2030c0"/><rect x="622.6" y="359.0" width="1.2" height="3.5" fill="#2030c0"/><rect x="755.2" y="331.9" width="1.5" height="3.9" fill="#2030c0"/><rect x="735.5" y="339.2" width="1.8" height="3.5" fill="#1a2acc"/><rect x="842.3" y="317.7" width="1.3" height="2.2" fill="#2030c0"/><rect x="684.9" y="346.0" width="1.2" height="4.1" fill="#1020d0"/><rect x="631.0" y="371.5" width="1.4" height="3.0" fill="#1020d0"/><rect x="669.5" y="356.3" width="1.5" height="3.1" fill="#1a2acc"/><rect x="642.7" y="355.5" width="1.4" height="3.7" fill="#1a2acc"/><rect x="795.4" y="325.6" width="1.2" height="4.5" fill="#2030c0"/><rect x="611.7" y="368.6" width="1.6" height="2.4" fill="#2030c0"/><rect x="774.6" y="326.5" width="1.7" height="1.7" fill="#1020d0"/><rect x="769.4" y="345.3" width="1.7" height="4.9" fill="#2030c0"/><rect x="705.7" y="347.1" width="1.0" height="2.1" fill="#1020d0"/><rect x="839.5" y="314.1" width="1.2" height="4.6" fill="#1a2acc"/><rect x="798.2" y="325.7" width="1.4" height="1.2" fill="#2030c0"/><rect x="765.6" y="336.6" width="1.9" height="3.4" fill="#2030c0"/><rect x="827.3" y="318.1" width="1.7" height="3.8" fill="#2030c0"/><rect x="752.6" y="330.1" width="2.0" height="5.2" fill="#1a2acc"/><rect x="802.8" y="336.9" width="1.4" height="5.1" fill="#1a2acc"/><rect x="712.2" y="348.5" width="1.2" height="3.8" fill="#1a2acc"/><rect x="597.2" y="360.9" width="1.8" height="4.5" fill="#1a2acc"/><rect x="837.8" y="330.8" width="1.3" height="1.2" fill="#1020d0"/><rect x="837.8" y="323.5" width="1.4" height="3.2" fill="#1020d0"/><rect x="837.7" y="330.2" width="1.1" height="2.8" fill="#2030c0"/><rect x="672.9" y="360.4" width="1.4" height="2.0" fill="#1020d0"/><rect x="651.5" y="349.3" width="1.5" height="2.1" fill="#1020d0"/><rect x="610.5" y="370.5" width="1.8" height="1.1" fill="#2030c0"/><rect x="836.2" y="328.5" width="1.6" height="3.8" fill="#2030c0"/><rect x="622.2" y="358.8" width="1.7" height="1.1" fill="#1a2acc"/><rect x="774.2" y="337.2" width="1.0" height="5.2" fill="#1020d0"/><rect x="842.5" y="316.5" width="1.3" height="1.3" fill="#1020d0"/><rect x="674.2" y="344.6" width="1.7" height="4.6" fill="#2030c0"/><rect x="653.6" y="358.7" width="1.8" height="4.6" fill="#1020d0"/><rect x="720.4" y="344.3" width="1.9" height="4.8" fill="#2030c0"/><rect x="754.5" y="331.1" width="1.4" height="3.5" fill="#1020d0"/><rect x="641.4" y="366.8" width="1.1" height="1.7" fill="#1a2acc"/><rect x="724.5" y="348.5" width="1.6" height="4.1" fill="#2030c0"/><rect x="652.3" y="354.5" width="1.0" height="1.9" fill="#2030c0"/><rect x="784.4" y="324.9" width="1.7" height="5.2" fill="#2030c0"/><rect x="598.3" y="369.1" width="1.4" height="4.5" fill="#2030c0"/><rect x="744.8" y="346.2" width="1.9" height="4.6" fill="#1020d0"/><rect x="709.1" y="344.9" width="1.2" height="2.0" fill="#1020d0"/><rect x="637.1" y="368.6" width="1.2" height="4.8" fill="#2030c0"/><rect x="606.9" y="357.3" width="2.0" height="3.5" fill="#1020d0"/><rect x="666.1" y="346.4" width="1.4" height="4.4" fill="#2030c0"/><rect x="777.5" y="346.3" width="1.3" height="2.5" fill="#1a2acc"/><rect x="798.6" y="333.0" width="1.8" height="3.1" fill="#1020d0"/><rect x="827.4" y="325.0" width="1.8" height="3.9" fill="#1a2acc"/><rect x="831.3" y="320.8" width="1.8" height="3.5" fill="#1020d0"/><rect x="729.3" y="342.1" width="1.9" height="4.6" fill="#2030c0"/><rect x="606.6" y="379.3" width="1.2" height="2.3" fill="#2030c0"/><rect x="811.0" y="333.3" width="1.0" height="4.6" fill="#2030c0"/><rect x="720.1" y="356.4" width="1.1" height="1.3" fill="#2030c0"/><rect x="672.7" y="353.8" width="1.1" height="2.9" fill="#1a2acc"/><rect x="670.0" y="345.0" width="1.9" height="2.1" fill="#1020d0"/><rect x="733.5" y="334.3" width="1.2" height="4.5" fill="#1020d0"/><rect x="625.4" y="367.8" width="1.8" height="2.2" fill="#1a2acc"/><rect x="621.4" y="363.8" width="1.0" height="1.5" fill="#2030c0"/><rect x="733.2" y="334.9" width="1.0" height="2.5" fill="#2030c0"/><rect x="605.6" y="374.3" width="1.6" height="4.8" fill="#2030c0"/><rect x="805.1" y="330.9" width="1.2" height="3.8" fill="#2030c0"/><rect x="795.2" y="322.9" width="1.5" height="3.6" fill="#1020d0"/><rect x="706.6" y="349.8" width="1.7" height="4.6" fill="#1a2acc"/><rect x="677.9" y="362.7" width="1.1" height="1.1" fill="#1020d0"/><rect x="703.0" y="348.1" width="1.7" height="4.5" fill="#1a2acc"/><rect x="772.4" y="329.1" width="1.0" height="1.5" fill="#1020d0"/><rect x="716.9" y="341.3" width="1.5" height="4.0" fill="#1020d0"/><rect x="683.8" y="362.5" width="1.2" height="5.2" fill="#1020d0"/><rect x="669.3" y="366.2" width="1.4" height="1.4" fill="#1a2acc"/><rect x="746.1" y="343.1" width="1.1" height="5.0" fill="#1a2acc"/><rect x="645.9" y="366.3" width="1.3" height="1.2" fill="#1a2acc"/><rect x="842.5" y="320.6" width="1.2" height="4.6" fill="#1020d0"/><rect x="648.3" y="368.2" width="1.0" height="3.3" fill="#1020d0"/><rect x="664.6" y="356.9" width="1.1" height="1.9" fill="#1020d0"/><rect x="658.3" y="361.7" width="1.4" height="3.6" fill="#1a2acc"/><rect x="661.6" y="363.2" width="1.9" height="1.9" fill="#1020d0"/><rect x="603.0" y="364.0" width="1.5" height="5.0" fill="#2030c0"/><rect x="627.6" y="373.2" width="2.0" height="2.0" fill="#1020d0"/><rect x="735.0" y="350.6" width="1.2" height="2.2" fill="#2030c0"/><rect x="598.2" y="359.7" width="1.7" height="4.5" fill="#2030c0"/><rect x="632.8" y="373.3" width="1.8" height="1.8" fill="#1020d0"/><rect x="820.2" y="318.5" width="1.2" height="4.4" fill="#1020d0"/><rect x="776.8" y="345.6" width="1.1" height="5.2" fill="#2030c0"/><rect x="697.4" y="360.7" width="2.0" height="3.6" fill="#2030c0"/><rect x="697.3" y="341.8" width="1.2" height="1.5" fill="#1020d0"/><rect x="661.9" y="355.6" width="1.6" height="3.3" fill="#1a2acc"/><rect x="605.5" y="359.3" width="1.5" height="3.6" fill="#2030c0"/><rect x="828.2" y="325.1" width="1.5" height="1.7" fill="#1020d0"/><rect x="611.2" y="364.9" width="1.1" height="3.0" fill="#2030c0"/><rect x="790.9" y="332.9" width="1.6" height="3.3" fill="#2030c0"/><rect x="796.5" y="331.4" width="1.2" height="4.1" fill="#2030c0"/><rect x="685.3" y="346.6" width="1.5" height="5.1" fill="#1a2acc"/><rect x="681.7" y="364.7" width="1.9" height="2.6" fill="#1a2acc"/><rect x="729.8" y="351.0" width="1.8" height="2.0" fill="#1a2acc"/><rect x="826.9" y="317.6" width="1.4" height="4.6" fill="#2030c0"/><rect x="714.1" y="347.0" width="1.9" height="2.8" fill="#1a2acc"/><rect x="774.5" y="326.5" width="1.4" height="1.0" fill="#2030c0"/><rect x="776.6" y="340.2" width="1.8" height="1.5" fill="#2030c0"/><rect x="836.3" y="333.7" width="1.1" height="4.2" fill="#2030c0"/><rect x="611.5" y="375.2" width="1.8" height="2.0" fill="#1020d0"/>
<path d="M610.0 374.3V388.9M612.4 374.8V389.1M614.7 374.1V388.4M617.1 373.6V383.7M619.4 372.0V389.4M621.8 374.2V386.7M624.1 375.5V384.2M626.5 371.2V385.0M628.8 375.3V387.1M631.2 372.4V385.6M633.5 370.3V387.9M635.9 373.0V386.3M638.2 370.3V384.0M640.6 372.6V383.1M642.9 372.5V380.6M645.3 372.2V380.5M647.6 369.6V378.6M650.0 368.2V384.1M652.3 364.8V378.0M654.7 368.4V381.3M657.0 369.1V381.1M659.4 368.9V380.0M661.7 363.9V379.0M664.1 364.4V374.2M666.4 365.8V381.5M668.8 365.0V379.3M671.1 365.8V373.1M673.5 364.7V380.2M675.8 365.1V374.2M678.2 366.6V376.7M680.5 366.4V377.7M682.9 363.1V374.2M685.2 362.2V372.5M687.6 364.3V370.5M689.9 364.9V371.7M692.3 360.1V373.4M694.6 358.6V372.9M697.0 356.0V374.6M699.3 356.0V374.1M701.7 361.5V373.0M704.0 360.2V367.7M706.4 358.3V366.2M708.7 359.2V371.6M711.1 354.5V368.3M713.4 353.0V369.7M715.8 357.4V364.3M718.1 356.3V370.4M720.5 352.3V370.2M722.8 352.6V362.6M725.2 350.6V368.0M727.5 351.0V368.4M729.9 352.5V361.7M732.2 355.1V363.2M734.6 349.1V360.1M736.9 350.0V363.3M739.3 351.1V363.8M741.6 347.3V358.7M744.0 353.3V361.6M746.3 351.5V364.9M748.7 350.0V363.2M751.0 346.6V358.5M753.4 348.4V364.2M755.7 351.6V357.7M758.1 348.5V357.7M760.4 345.8V357.2M762.8 350.4V357.5M765.1 345.7V354.7M767.5 348.3V354.2M769.8 347.7V355.0M772.2 342.5V352.9M774.5 342.9V359.7M776.9 342.5V354.3M779.2 345.1V353.0M781.6 344.7V358.4M783.9 345.1V350.5M786.3 344.0V356.1M788.6 343.6V353.9M791.0 337.7V354.2M793.3 341.0V352.2M795.7 342.0V349.3M798.0 338.4V352.5M800.4 342.1V354.9M802.7 341.6V348.6M805.1 337.4V350.2M807.4 337.2V346.2M809.8 336.0V352.5M812.1 335.6V351.6M814.5 339.2V348.2M816.8 339.0V351.5M819.2 331.2V347.9M821.5 338.3V345.2M823.9 333.1V343.4M826.2 336.8V346.3M828.6 334.0V346.1M830.9 336.0V345.0M833.3 332.7V343.9M835.6 330.6V347.6M838.0 332.6V343.4M840.3 327.7V344.1M842.7 326.8V342.2M845.0 327.7V341.1" stroke="#ffff00" stroke-width="1.4" fill="none" opacity="0.9"/>
<polygon points="838.5,293.0 852.4,320.8 858.5,334.7 864.7,347.0 858.0,360.0 846.0,368.0 838.0,362.0 838.0,336.0" fill="#ffff00" opacity="0.88"/>
<rect x="843.9" y="309.8" width="1.8" height="1.6" fill="#2030c0"/><rect x="847.5" y="337.3" width="2.1" height="2.5" fill="#2030c0"/><rect x="860.3" y="340.0" width="1.6" height="3.9" fill="#2030c0"/><rect x="851.2" y="325.6" width="2.0" height="1.5" fill="#1020d0"/><rect x="856.9" y="339.6" width="1.9" height="4.4" fill="#2030c0"/><rect x="839.1" y="337.3" width="2.5" height="4.6" fill="#2030c0"/><rect x="840.1" y="321.5" width="2.0" height="3.1" fill="#1020d0"/><rect x="849.6" y="343.7" width="2.4" height="2.1" fill="#2030c0"/><rect x="845.3" y="328.8" width="1.7" height="3.8" fill="#2030c0"/><rect x="852.7" y="356.3" width="1.7" height="2.1" fill="#1020d0"/><rect x="847.6" y="352.7" width="1.7" height="4.2" fill="#1020d0"/><rect x="847.0" y="343.2" width="2.3" height="4.0" fill="#2030c0"/><rect x="841.3" y="313.2" width="2.1" height="3.4" fill="#2030c0"/><rect x="852.3" y="332.8" width="1.4" height="3.5" fill="#2030c0"/>
<path d="M697.5 433 Q705 418 766 404 L850 385 L898 396 L909 437 L846 452 L770 458 Q715 462 697.5 433 Z" fill="#ffff00" opacity="0.25"/>
<polygon points="742.0,402.0 780.0,391.5 846.0,384.5 860.0,392.0 856.0,445.0 800.0,452.0 760.0,453.0 742.0,440.0" fill="#ffff00" opacity="0.93"/>
<rect x="782.1" y="417.6" width="1.0" height="3.4" fill="#1a2acc"/><rect x="822.7" y="399.5" width="2.2" height="2.7" fill="#3a7a2a"/><rect x="770.4" y="435.0" width="1.2" height="2.2" fill="#223ec0"/><rect x="813.0" y="402.4" width="1.2" height="3.1" fill="#1a2acc"/><rect x="757.0" y="410.8" width="1.1" height="3.4" fill="#223ec0"/><rect x="821.0" y="419.0" width="2.1" height="2.3" fill="#3a7a2a"/><rect x="785.1" y="399.3" width="2.1" height="3.9" fill="#3a7a2a"/><rect x="817.5" y="404.3" width="1.0" height="4.5" fill="#3a7a2a"/><rect x="818.6" y="440.9" width="1.5" height="2.0" fill="#3a7a2a"/><rect x="760.6" y="435.3" width="2.1" height="3.4" fill="#3a7a2a"/><rect x="823.3" y="435.4" width="1.7" height="1.6" fill="#3a7a2a"/><rect x="757.4" y="418.8" width="1.9" height="1.9" fill="#223ec0"/><rect x="771.0" y="403.4" width="1.2" height="2.5" fill="#223ec0"/><rect x="743.9" y="413.3" width="2.2" height="2.3" fill="#1a2acc"/><rect x="833.1" y="421.5" width="1.2" height="4.8" fill="#1a2acc"/><rect x="747.1" y="430.4" width="1.6" height="2.6" fill="#223ec0"/><rect x="853.0" y="388.6" width="1.3" height="1.7" fill="#3a7a2a"/><rect x="842.1" y="424.5" width="1.4" height="1.1" fill="#1a2acc"/><rect x="780.7" y="450.3" width="1.9" height="1.7" fill="#3a7a2a"/><rect x="764.2" y="425.2" width="1.9" height="1.6" fill="#3a7a2a"/><rect x="797.7" y="414.2" width="1.7" height="4.2" fill="#3a7a2a"/><rect x="752.2" y="436.7" width="1.6" height="3.4" fill="#223ec0"/><rect x="854.8" y="405.3" width="2.2" height="2.9" fill="#223ec0"/><rect x="794.2" y="435.0" width="1.3" height="3.7" fill="#1a2acc"/><rect x="856.5" y="411.7" width="1.7" height="4.0" fill="#3a7a2a"/><rect x="772.9" y="442.2" width="1.4" height="1.6" fill="#1a2acc"/><rect x="782.0" y="424.4" width="1.5" height="2.8" fill="#223ec0"/><rect x="784.7" y="408.3" width="1.5" height="4.2" fill="#1a2acc"/><rect x="803.2" y="398.6" width="2.1" height="1.8" fill="#3a7a2a"/><rect x="764.6" y="419.7" width="1.7" height="3.8" fill="#223ec0"/><rect x="747.4" y="405.5" width="1.9" height="2.3" fill="#1a2acc"/><rect x="800.4" y="407.4" width="1.4" height="1.4" fill="#223ec0"/><rect x="786.0" y="394.6" width="1.7" height="1.0" fill="#1a2acc"/><rect x="784.8" y="409.6" width="1.3" height="1.4" fill="#3a7a2a"/><rect x="787.9" y="436.4" width="1.4" height="4.7" fill="#223ec0"/><rect x="849.1" y="409.2" width="1.9" height="4.4" fill="#3a7a2a"/><rect x="838.7" y="392.5" width="1.0" height="2.8" fill="#1a2acc"/><rect x="764.7" y="448.0" width="2.1" height="2.2" fill="#3a7a2a"/><rect x="749.9" y="402.8" width="1.9" height="3.6" fill="#3a7a2a"/><rect x="827.7" y="441.0" width="1.6" height="4.0" fill="#3a7a2a"/><rect x="766.5" y="432.7" width="2.1" height="1.7" fill="#3a7a2a"/><rect x="833.8" y="408.2" width="2.1" height="1.5" fill="#223ec0"/><rect x="784.6" y="394.7" width="1.4" height="4.5" fill="#223ec0"/><rect x="818.5" y="417.8" width="1.9" height="3.8" fill="#223ec0"/><rect x="810.2" y="432.8" width="1.1" height="4.7" fill="#1a2acc"/><rect x="830.1" y="396.7" width="1.7" height="1.1" fill="#3a7a2a"/><rect x="818.5" y="401.3" width="1.7" height="2.2" fill="#223ec0"/><rect x="810.1" y="422.2" width="1.2" height="1.5" fill="#3a7a2a"/><rect x="805.5" y="419.8" width="1.2" height="1.1" fill="#223ec0"/><rect x="764.3" y="427.4" width="1.2" height="2.2" fill="#223ec0"/><rect x="834.0" y="433.2" width="1.8" height="1.6" fill="#3a7a2a"/><rect x="835.0" y="407.5" width="1.8" height="4.4" fill="#1a2acc"/><rect x="814.5" y="396.5" width="1.2" height="4.3" fill="#3a7a2a"/><rect x="762.4" y="408.3" width="1.6" height="1.2" fill="#1a2acc"/><rect x="750.4" y="404.8" width="1.1" height="3.8" fill="#1a2acc"/><rect x="800.6" y="393.5" width="2.0" height="2.7" fill="#223ec0"/><rect x="825.1" y="390.4" width="1.2" height="1.6" fill="#223ec0"/><rect x="751.8" y="436.8" width="1.9" height="4.2" fill="#3a7a2a"/><rect x="850.6" y="431.6" width="1.9" height="4.6" fill="#223ec0"/><rect x="825.3" y="414.5" width="2.0" height="3.3" fill="#3a7a2a"/><rect x="829.6" y="441.9" width="1.6" height="2.7" fill="#3a7a2a"/><rect x="789.4" y="413.9" width="1.7" height="1.4" fill="#223ec0"/><rect x="838.9" y="430.7" width="1.8" height="3.9" fill="#1a2acc"/><rect x="848.6" y="431.5" width="2.1" height="3.3" fill="#223ec0"/><rect x="772.3" y="413.1" width="1.3" height="2.0" fill="#3a7a2a"/><rect x="811.1" y="438.9" width="2.2" height="4.5" fill="#223ec0"/><rect x="761.0" y="437.7" width="2.0" height="4.7" fill="#223ec0"/><rect x="831.1" y="410.3" width="1.4" height="4.4" fill="#3a7a2a"/><rect x="824.8" y="418.1" width="2.2" height="2.4" fill="#223ec0"/><rect x="764.6" y="420.7" width="1.3" height="2.3" fill="#3a7a2a"/><rect x="834.7" y="422.9" width="1.1" height="3.5" fill="#1a2acc"/><rect x="745.0" y="439.7" width="1.9" height="3.7" fill="#223ec0"/><rect x="816.3" y="415.5" width="1.1" height="3.6" fill="#1a2acc"/><rect x="854.6" y="421.6" width="1.1" height="3.4" fill="#1a2acc"/><rect x="814.9" y="426.7" width="2.1" height="1.1" fill="#3a7a2a"/><rect x="830.6" y="392.7" width="1.6" height="3.9" fill="#1a2acc"/><rect x="797.6" y="431.7" width="1.7" height="2.9" fill="#223ec0"/><rect x="774.5" y="402.9" width="1.9" height="2.7" fill="#1a2acc"/><rect x="853.9" y="414.7" width="1.5" height="4.0" fill="#223ec0"/><rect x="794.6" y="447.2" width="1.8" height="4.6" fill="#3a7a2a"/><rect x="774.3" y="414.0" width="1.2" height="3.4" fill="#3a7a2a"/><rect x="799.5" y="433.5" width="1.2" height="3.7" fill="#1a2acc"/><rect x="827.6" y="408.4" width="1.2" height="3.4" fill="#223ec0"/><rect x="812.5" y="393.2" width="1.0" height="2.9" fill="#223ec0"/><rect x="812.7" y="448.8" width="1.7" height="3.0" fill="#1a2acc"/><rect x="806.7" y="412.4" width="2.0" height="3.3" fill="#223ec0"/><rect x="807.6" y="414.4" width="2.0" height="3.8" fill="#1a2acc"/><rect x="849.4" y="392.0" width="1.8" height="4.6" fill="#1a2acc"/><rect x="785.0" y="444.1" width="1.2" height="2.9" fill="#3a7a2a"/><rect x="845.8" y="394.3" width="1.0" height="1.4" fill="#1a2acc"/><rect x="780.1" y="423.5" width="1.4" height="2.6" fill="#223ec0"/><rect x="764.1" y="451.7" width="1.5" height="3.4" fill="#223ec0"/><rect x="834.9" y="427.5" width="1.3" height="1.1" fill="#1a2acc"/><rect x="845.1" y="412.7" width="2.2" height="3.1" fill="#223ec0"/><rect x="787.2" y="435.9" width="2.2" height="2.8" fill="#223ec0"/><rect x="801.9" y="439.9" width="1.9" height="1.2" fill="#1a2acc"/><rect x="791.6" y="447.8" width="1.7" height="2.5" fill="#1a2acc"/><rect x="776.6" y="452.0" width="1.5" height="2.2" fill="#1a2acc"/><rect x="775.6" y="427.1" width="2.1" height="3.7" fill="#1a2acc"/><rect x="839.8" y="386.0" width="1.8" height="1.9" fill="#223ec0"/><rect x="800.0" y="432.2" width="1.3" height="4.0" fill="#223ec0"/><rect x="760.6" y="441.2" width="1.8" height="3.1" fill="#223ec0"/><rect x="751.7" y="436.6" width="1.7" height="4.7" fill="#223ec0"/><rect x="833.3" y="418.4" width="1.7" height="1.8" fill="#1a2acc"/><rect x="816.2" y="398.7" width="1.8" height="1.9" fill="#223ec0"/><rect x="771.2" y="402.3" width="1.5" height="4.3" fill="#223ec0"/><rect x="811.0" y="409.4" width="1.4" height="3.4" fill="#3a7a2a"/><rect x="775.3" y="442.8" width="1.1" height="3.8" fill="#223ec0"/><rect x="803.1" y="393.6" width="1.6" height="3.9" fill="#3a7a2a"/><rect x="815.4" y="425.7" width="2.1" height="4.7" fill="#223ec0"/><rect x="798.3" y="446.3" width="1.0" height="1.1" fill="#223ec0"/><rect x="822.2" y="417.8" width="1.3" height="1.8" fill="#223ec0"/><rect x="831.8" y="407.6" width="2.0" height="2.0" fill="#1a2acc"/><rect x="783.2" y="403.3" width="2.1" height="1.4" fill="#223ec0"/><rect x="768.6" y="427.0" width="1.9" height="2.8" fill="#223ec0"/><rect x="779.2" y="409.0" width="1.1" height="3.4" fill="#1a2acc"/><rect x="784.8" y="418.2" width="1.8" height="1.6" fill="#1a2acc"/><rect x="782.5" y="393.3" width="1.5" height="4.5" fill="#223ec0"/><rect x="773.2" y="429.1" width="1.8" height="2.7" fill="#1a2acc"/><rect x="818.5" y="444.2" width="1.5" height="4.0" fill="#223ec0"/><rect x="766.2" y="411.5" width="1.2" height="2.7" fill="#3a7a2a"/><rect x="790.2" y="399.2" width="1.4" height="3.3" fill="#1a2acc"/><rect x="856.1" y="412.4" width="1.1" height="2.5" fill="#3a7a2a"/><rect x="849.7" y="435.9" width="1.8" height="3.3" fill="#1a2acc"/><rect x="800.7" y="410.3" width="1.2" height="4.3" fill="#3a7a2a"/><rect x="801.1" y="389.9" width="2.1" height="1.9" fill="#3a7a2a"/><rect x="758.0" y="430.5" width="1.7" height="4.2" fill="#1a2acc"/><rect x="841.1" y="418.0" width="1.1" height="1.8" fill="#3a7a2a"/><rect x="796.6" y="451.9" width="1.9" height="3.9" fill="#3a7a2a"/><rect x="839.8" y="405.3" width="1.4" height="4.6" fill="#1a2acc"/>
<path d="M697.5 433 Q705 418 766 404 L840 388" fill="none" stroke="#2f9f5a" stroke-width="1.8"/><path d="M697.5 433 Q712 458 770 457 L800 456" fill="none" stroke="#2f9f5a" stroke-width="1.5" stroke-dasharray="4 2"/>
<polygon points="852.0,390.0 897.0,398.0 905.0,437.0 860.0,448.0" fill="#2a50d8"/>
<path d="M853.0 392.0 L860.0 447.0" stroke="#ffff00" stroke-width="1.9"/>
<path d="M857.2 392.8 L864.2 446.0" stroke="#4aa04a" stroke-width="1.9"/>
<path d="M861.4 393.6 L868.4 445.0" stroke="#ffff00" stroke-width="1.9"/>
<path d="M865.6 394.4 L872.6 444.0" stroke="#4aa04a" stroke-width="1.9"/>
<path d="M869.8 395.2 L876.8 443.0" stroke="#ffff00" stroke-width="1.9"/>
<path d="M874.0 396.0 L881.0 442.0" stroke="#4aa04a" stroke-width="1.9"/>
<path d="M878.2 396.8 L885.2 441.0" stroke="#ffff00" stroke-width="1.9"/>
<path d="M882.4 397.6 L889.4 440.0" stroke="#4aa04a" stroke-width="1.9"/>
<path d="M886.6 398.4 L893.6 439.0" stroke="#ffff00" stroke-width="1.9"/>
<path d="M890.8 399.2 L897.8 438.0" stroke="#4aa04a" stroke-width="1.9"/>
<path d="M846 384.5 L897 395 L908 436 L897.5 439.5 L888.5 404 L843 394 Z" fill="#ffff00"/>
<polygon points="908,436 917,430 921,437 911,441" fill="#9a9a8a"/>
<path d="M862 388 L868 352 L872 390 M870 392 L880 364 L884 394 M884 394 L890 374 L894 396" stroke="#ffff00" stroke-width="1.6" fill="none"/>
<ellipse cx="656.5" cy="410.5" rx="5.8" ry="4.8" fill="#e01010"/><rect x="650.6" y="398" width="11.6" height="9.5" rx="3" fill="#8a1060"/>
<ellipse cx="693.2" cy="477.6" rx="5.8" ry="4.8" fill="#e01010"/><rect x="687.4" y="463.5" width="11.6" height="11" rx="3" fill="#8a1060"/>
<rect x="726" y="415" width="6" height="8" fill="#ff5a00"/>
<circle cx="567.6" cy="348.6" r="2.6" fill="#e01010"/>
</g>
<path d="M567.0 348.5L568.6 333.1M568.6 333.1L602.8 335.4M579.0 330.8L581.2 366.2M581.2 366.2L588.2 450.0M588.2 450.0L593.4 505.0M501.2 366.2L587.4 350.0M510.4 377.7L581.2 366.2M515.0 384.7L585.9 370.8M501.2 366.2L601.3 397.0M581.2 367.7L539.7 430.9M503.0 403.2L602.8 400.8M533.5 415.5L609.0 381.6M525.8 407.8L615.1 418.6M552.0 423.2L595.1 410.9M545.8 437.0L621.3 429.3M581.2 450.0L625.9 434.0M551.2 418.6L551.2 427.8M609.7 423.0L609.7 429.0M553.9 459.2L625.7 434.1M559.2 464.6L636.4 444.9M562.8 471.8L640.0 446.7M541.3 423.3L561.0 403.6M587.4 350.0L640.0 339.0M585.9 370.8L628.0 362.0M601.3 397.0L640.0 408.0M609.0 381.6L640.0 372.0M512.0 380.0L560.0 372.0M602.8 335.4L612.0 352.0M520.0 392.0L600.0 378.0" stroke="#eaea20" stroke-width="1.5" fill="none"/>
<path d="M553.9 439.5 L589.8 453.9" stroke="#a02a10" stroke-width="1.4"/><path d="M362 364.5 L394 377" stroke="#a02a10" stroke-width="1.4"/>
<path d="M360.2 356 V384 M362.6 352 V384" stroke="#ffff00" stroke-width="1.2"/>
<circle cx="591" cy="509" r="2.2" fill="#e01010"/>
</svg>
<div class="abs hdr" style="top:40.3px;"><div class="t" style="left:31.6px;letter-spacing:0.061px">BROWSER</div></div>
<div class="abs hdr" style="top:802.8px;"><div class="t" style="left:31px;letter-spacing:-0.166px">COMMENTS</div></div>
<div class="rowbg" style="left:55.4px;top:77.7px;width:183.4px;background:#f0f0f0;"></div>
<div class="rowbg" style="left:77.6px;top:107.7px;width:111.6px;background:#f0f0f0;"></div>
<div class="rowbg" style="left:77.3px;top:137.7px;width:136.8px;background:#f0f0f0;"></div>
<div class="rowbg" style="left:77.3px;top:167.7px;width:128.7px;background:#f0f0f0;"></div>
<div class="rowbg" style="left:77.3px;top:197.7px;width:97.0px;background:#f0f0f0;"></div>
<div class="rowbg" style="left:100.5px;top:227.7px;width:132.9px;background:#f0f0f0;"></div>
<div class="rowbg" style="left:131.1px;top:227.7px;width:71.1px;background:#a9cdf8;"></div>
<div class="rowbg" style="left:122.8px;top:257.7px;width:142.2px;background:#f0f0f0;"></div>
<div class="rowbg" style="left:122.8px;top:287.7px;width:146.5px;background:#f0f0f0;"></div>
<div class="rowbg" style="left:122.8px;top:317.7px;width:132.3px;background:#1b8fd2;"></div>
<div class="lbl" style="left:128.4px;top:78.5px;font-size:13px;letter-spacing:-0.105px;color:#4d4d4d;">MOLD_CAST v7</div>
<div class="lbl" style="left:119.6px;top:108.5px;font-size:13px;letter-spacing:-0.222px;color:#4d4d4d;">Units: mm</div>
<div class="lbl" style="left:119.5px;top:138.5px;font-size:13px;letter-spacing:0.367px;color:#4d4d4d;">Named Views</div>
<div class="lbl" style="left:150.4px;top:168.5px;font-size:13px;letter-spacing:-0.101px;color:#4d4d4d;">Models</div>
<div class="lbl" style="left:119.5px;top:198.5px;font-size:13px;letter-spacing:0.088px;color:#4d4d4d;">Setups</div>
<div class="lbl" style="left:142.9px;top:228.5px;font-size:13px;letter-spacing:0.360px;color:#1f3a8c;font-weight:bold;">Setup3</div>
<div class="lbl" style="left:164.1px;top:258.5px;font-size:13px;letter-spacing:0.171px;color:#4d4d4d;">[T0] Adaptive4</div>
<div class="lbl" style="left:164.1px;top:288.5px;font-size:13px;letter-spacing:0.078px;color:#4d4d4d;">[T1] Horizontal2</div>
<div class="lbl" style="left:164.1px;top:318.5px;font-size:13px;letter-spacing:-0.042px;color:#ffffff;">[T1] Parallel2</div>
<div class="abs" id="navbar"></div>
<div class="abs" id="botbar1"></div>
<div class="abs" id="botbar2"></div>
<svg width="1114" height="844" viewBox="0 0 1114 844">
<defs>
<linearGradient id="triG" x1="0" y1="0" x2="1" y2="1"><stop offset="0" stop-color="#b5b5b5"/><stop offset="1" stop-color="#4a4a4a"/></linearGradient>
<linearGradient id="sliderG" x1="0" y1="0" x2="1" y2="0"><stop offset="0" stop-color="#b0b0b0" stop-opacity="0"/><stop offset="0.25" stop-color="#b0b0b0" stop-opacity="1"/><stop offset="0.88" stop-color="#b0b0b0" stop-opacity="1"/><stop offset="1" stop-color="#b0b0b0" stop-opacity="0"/></linearGradient>
<linearGradient id="monG" x1="0" y1="0" x2="0" y2="1"><stop offset="0" stop-color="#9fc0ea"/><stop offset="1" stop-color="#6f9bd6"/></linearGradient>
</defs>
<g fill="#2b2b2b"><path d="M16.2 55.8 L22.3 52 L22.3 59.6 Z"/><path d="M22.6 55.8 L28.9 52 L28.9 59.6 Z"/></g>
<circle cx="364.3" cy="55.5" r="5.4" fill="#2a2a2a"/><rect x="361" y="54.7" width="6.6" height="1.6" fill="#f2f2f2"/>
<path d="M379.4 48.8V62.5" stroke="#555" stroke-width="1.2"/><path d="M381.8 51.5V59.8" stroke="#999" stroke-width="1.4"/>
<circle cx="364.3" cy="818.5" r="5.4" fill="#2a2a2a"/><rect x="361" y="817.8" width="6.6" height="1.5" fill="#f2f2f2"/><rect x="363.55" y="815.2" width="1.5" height="6.6" fill="#f2f2f2"/>
<path d="M379.4 811.5V825.5" stroke="#555" stroke-width="1.2"/><path d="M381.8 814.5V822.5" stroke="#999" stroke-width="1.4"/>
<path d="M30.8 96.6 H44.9 V82.6 Z" fill="url(#triG)" stroke="#3a3a3a" stroke-width="1" stroke-linejoin="round"/>
<path d="M54.0 216.6 H68.1 V202.6 Z" fill="url(#triG)" stroke="#3a3a3a" stroke-width="1" stroke-linejoin="round"/>
<path d="M76.2 246.6 H90.3 V232.6 Z" fill="url(#triG)" stroke="#3a3a3a" stroke-width="1" stroke-linejoin="round"/>
<path d="M55.8 142.2 L66.6 150.0 L55.8 157.8 Z" fill="#fdfdfd" stroke="#444" stroke-width="1.5" stroke-linejoin="round"/>
<path d="M55.8 172.2 L66.6 180.0 L55.8 187.8 Z" fill="#fdfdfd" stroke="#444" stroke-width="1.5" stroke-linejoin="round"/>
<path d="M100.9 262.2 L111.7 270.0 L100.9 277.8 Z" fill="#fdfdfd" stroke="#444" stroke-width="1.5" stroke-linejoin="round"/>
<path d="M100.9 292.2 L111.7 300.0 L100.9 307.8 Z" fill="#fdfdfd" stroke="#444" stroke-width="1.5" stroke-linejoin="round"/>
<path d="M100.9 322.2 L111.7 330.0 L100.9 337.8 Z" fill="#fdfdfd" stroke="#444" stroke-width="1.5" stroke-linejoin="round"/>
<g><path d="M58.6 90.0 Q68.8 78.5 79.0 90.0 Q68.8 101.5 58.6 90.0 Z" fill="#a9a9a9"/><circle cx="68.8" cy="90.0" r="3.6" fill="#d9d9d9"/><circle cx="68.8" cy="90.0" r="1.9" fill="#9a9a9a"/></g>
<g><path d="M81.0 180.0 Q91.2 168.5 101.4 180.0 Q91.2 191.5 81.0 180.0 Z" fill="#a9a9a9"/><circle cx="91.2" cy="180.0" r="3.6" fill="#d9d9d9"/><circle cx="91.2" cy="180.0" r="1.9" fill="#9a9a9a"/></g>
<g transform="translate(90.0,80.2)" stroke="#3c3c3c" stroke-width="1.3" stroke-linejoin="round"><path d="M1.2 4.2 L4.3 0.8 H11.3 L12.3 1.8 V8.6 L9 11 V18.9 H2.4 L1.2 17.7 Z" fill="#e3e3e3"/><path d="M9 11.2 L11.6 8.3 H18.6 L19.6 9.4 V15.8 L16.5 18.9 H9 Z" fill="#eaeaea"/><path d="M7.4 4.6 V18.6" stroke="#c9c9c9" stroke-width="1"/><path d="M1.8 11.5 H7" stroke="#f7f7f7" stroke-width="1"/></g>
<g transform="translate(112.2,170.2)" stroke="#3c3c3c" stroke-width="1.3" stroke-linejoin="round"><path d="M1.2 4.2 L4.3 0.8 H11.3 L12.3 1.8 V8.6 L9 11 V18.9 H2.4 L1.2 17.7 Z" fill="#e3e3e3"/><path d="M9 11.2 L11.6 8.3 H18.6 L19.6 9.4 V15.8 L16.5 18.9 H9 Z" fill="#eaeaea"/><path d="M7.4 4.6 V18.6" stroke="#c9c9c9" stroke-width="1"/><path d="M1.8 11.5 H7" stroke="#f7f7f7" stroke-width="1"/></g>
<g><path d="M84 111.2 H93.6 L98.4 116 V126.5 H84 Z" fill="#dfe3ea" stroke="#4d4d4d" stroke-width="1.4" stroke-linejoin="round"/><path d="M93.4 111.4 V116.2 H98.2" fill="#fff" stroke="#4d4d4d" stroke-width="1"/><rect x="81.6" y="125.8" width="18.6" height="4.2" rx="0.8" fill="#f3a21a"/><path d="M84 127.2v1.6M86.4 127.2v1.6M88.8 127.2v1.6M91.2 127.2v1.6M93.6 127.2v1.6M96 127.2v1.6M98.2 127.2v1.6" stroke="#c37a00" stroke-width="0.9"/></g>
<path d="M81.4 143 H88.4 L89.6 145.4 H100.8 V158 H81.4 Z" fill="#a5a5a5"/><path d="M82.4 144.4 H87.6" stroke="#d0d0d0" stroke-width="1"/>
<g transform="translate(81.6,201.6)" fill="#f6f6f6" stroke="#444" stroke-width="1.3" stroke-linejoin="round"><path d="M1 15 V0.8 H6.6 L8 3 H11.2"/><path d="M7.4 8 Q9.6 1.6 14.2 8" fill="#e6eef9"/><path d="M1 15 L5.4 8 H18.6 L14.8 15 Z"/></g>
<g transform="translate(103.8,231.6)" fill="#f6f6f6" stroke="#444" stroke-width="1.3" stroke-linejoin="round"><path d="M1 15 V0.8 H6.6 L8 3 H11.2"/><path d="M7.4 8 Q9.6 1.6 14.2 8" fill="#e6eef9"/><path d="M1 15 L5.4 8 H18.6 L14.8 15 Z"/></g>
<circle cx="215.4" cy="240.2" r="7.5" fill="#fbfbfb" stroke="#333" stroke-width="1.4"/><circle cx="215.4" cy="240.2" r="3" fill="#222"/>
<g transform="translate(126.2,260)" stroke-linejoin="round"><path d="M1 5 L5 0.8 H19.2 V13.6 L15 18.4 H1 Z" fill="#e9e9e9" stroke="#444" stroke-width="1.3"/><path d="M4 9.2 L8.6 4.8 H16.6 L12.6 9.2 Z M3.4 14.6 L8 10.4 H15.4 L11.2 14.6 Z" fill="#2a6fb8" stroke="#1b4f8d" stroke-width="0.8"/><path d="M6 7.4 H15 M5.4 12.6 H13.6" stroke="#173f73" stroke-width="1"/></g>
<g transform="translate(126.4,290.6)" stroke-linejoin="round"><path d="M7 0.8 H19 V10.4 Q19 12 17.6 13 L15.6 14.6 H7 Z" fill="#d5d5d5" stroke="#444" stroke-width="1.3"/><path d="M0.8 18 L4.8 12.2 H15.6 L12 18 Z" fill="#3d86cf" stroke="#1d4f8a" stroke-width="1.2"/><path d="M4.6 15.8 L6.2 13.8 H12.6 L11.2 15.8 Z" fill="#8fc0ee"/></g>
<g transform="translate(127,319.8)" stroke-linejoin="round"><path d="M5 0.8 H18.4 V15 L15.6 19.4 H0.8 Z" fill="#b9b9b9" stroke="#3a3a3a" stroke-width="1.2"/><path d="M3.4 17.6 L7.4 2.4 M7.4 17.6 L11.4 2.4 M11.4 17.6 L15.2 2.4" stroke="#1f5ea8" stroke-width="1.6"/><path d="M4.6 17.6 L8.6 2.4 M8.6 17.6 L12.6 2.4" stroke="#f3f3f3" stroke-width="0.9"/></g>
<defs><linearGradient id="sliderG2" x1="0" y1="0" x2="1" y2="0"><stop offset="0" stop-color="#aaa" stop-opacity="0"/><stop offset="0.45" stop-color="#aaa" stop-opacity="1"/><stop offset="1" stop-color="#aaa"/></linearGradient><linearGradient id="sliderG3" x1="0" y1="0" x2="1" y2="0"><stop offset="0" stop-color="#aaa"/><stop offset="0.8" stop-color="#aaa" stop-opacity="1"/><stop offset="1" stop-color="#aaa" stop-opacity="0"/></linearGradient></defs>
<rect x="556.2" y="724.1" width="4.8" height="21.8" rx="2.4" fill="#fff" stroke="#333" stroke-width="1.55"/>
<path d="M574.2 726.6 L565.4 735 L574.2 743.4" fill="none" stroke="#333" stroke-width="6.6" stroke-linecap="round" stroke-linejoin="round"/><path d="M574.2 726.6 L565.4 735 L574.2 743.4" fill="none" stroke="#fff" stroke-width="3.5" stroke-linecap="round" stroke-linejoin="round"/>
<circle cx="604.4" cy="734.6" r="8.3" fill="#fff" stroke="#333" stroke-width="1.6"/>
<path d="M627.9 726.6 L619.1 735 L627.9 743.4" fill="none" stroke="#333" stroke-width="6.6" stroke-linecap="round" stroke-linejoin="round"/><path d="M627.9 726.6 L619.1 735 L627.9 743.4" fill="none" stroke="#fff" stroke-width="3.5" stroke-linecap="round" stroke-linejoin="round"/>
<path d="M667.5 726.6 L659.4 735 L667.5 743.4" fill="none" stroke="#333" stroke-width="6.6" stroke-linecap="round" stroke-linejoin="round"/><path d="M667.5 726.6 L659.4 735 L667.5 743.4" fill="none" stroke="#fff" stroke-width="3.5" stroke-linecap="round" stroke-linejoin="round"/>
<path d="M681.1 726.6 L673.0 735 L681.1 743.4" fill="none" stroke="#333" stroke-width="6.6" stroke-linecap="round" stroke-linejoin="round"/><path d="M681.1 726.6 L673.0 735 L681.1 743.4" fill="none" stroke="#fff" stroke-width="3.5" stroke-linecap="round" stroke-linejoin="round"/>
<path d="M703 717.6 Q703 714.6 705.6 716.2 L724.8 733.2 Q726.6 735 724.8 736.6 L705.6 753.6 Q703 755.4 703 752.4 Z" fill="#fff" stroke="#333" stroke-width="1.6" stroke-linejoin="round"/>
<path d="M742.9 726.6 L751.0 735 L742.9 743.4" fill="none" stroke="#333" stroke-width="6.6" stroke-linecap="round" stroke-linejoin="round"/><path d="M742.9 726.6 L751.0 735 L742.9 743.4" fill="none" stroke="#fff" stroke-width="3.5" stroke-linecap="round" stroke-linejoin="round"/>
<path d="M756.5 726.6 L764.6 735 L756.5 743.4" fill="none" stroke="#333" stroke-width="6.6" stroke-linecap="round" stroke-linejoin="round"/><path d="M756.5 726.6 L764.6 735 L756.5 743.4" fill="none" stroke="#fff" stroke-width="3.5" stroke-linecap="round" stroke-linejoin="round"/>
<path d="M796.3 726.6 L805.1 735 L796.3 743.4" fill="none" stroke="#333" stroke-width="6.6" stroke-linecap="round" stroke-linejoin="round"/><path d="M796.3 726.6 L805.1 735 L796.3 743.4" fill="none" stroke="#fff" stroke-width="3.5" stroke-linecap="round" stroke-linejoin="round"/>
<circle cx="819.4" cy="734.6" r="8.3" fill="#fff" stroke="#333" stroke-width="1.6"/>
<path d="M849.7 726.6 L858.5 735 L849.7 743.4" fill="none" stroke="#333" stroke-width="6.6" stroke-linecap="round" stroke-linejoin="round"/><path d="M849.7 726.6 L858.5 735 L849.7 743.4" fill="none" stroke="#fff" stroke-width="3.5" stroke-linecap="round" stroke-linejoin="round"/>
<rect x="863.2" y="724.1" width="4.8" height="21.8" rx="2.4" fill="#fff" stroke="#333" stroke-width="1.55"/>
<rect x="524" y="776.1" width="188.5" height="1.4" fill="url(#sliderG2)"/>
<rect x="714.5" y="776.1" width="190" height="1.4" fill="url(#sliderG3)"/>
<circle cx="864.2" cy="775.9" r="8.1" fill="#fff" stroke="#333" stroke-width="1.6"/>
<g fill="none" stroke="#444" stroke-width="1.2"><ellipse cx="563.6" cy="818.6" rx="3.6" ry="9.6"/><path d="M557.4 814.6 Q553.6 818.4 557.6 821.8"/><path d="M558.2 823.4 Q565 826 571.6 822.2 Q575.4 819 571.2 815.2"/><path d="M566.6 811.8 L569.4 813.2" /></g><path d="M561.2 818.6 h4.4 M563.4 816.4 v4.4" stroke="#2d7fd3" stroke-width="1.4"/>
<path d="M580.8 816.2 h6.6 l-3.3 4.2 Z" fill="#222"/>
<g stroke="#444" stroke-width="1.3" stroke-linejoin="round"><path d="M596.6 815.6 L603.4 810.6 L605 813.4 L610.8 810.2 V815.6" fill="#f0f0f0"/><rect x="595.8" y="815.8" width="18.8" height="12.4" fill="#f4f4f4"/><rect x="599.2" y="819.4" width="12" height="5.4" fill="#9ea7b8"/></g>
<path d="M633.6 829 Q631.8 824.8 628.4 821.2 Q627.4 819.2 629.6 819.2 Q631.6 819.6 633.4 822 V813.6 Q634.4 811.6 635.6 813.4 V810.8 Q636.8 809 638.2 810.8 V810.4 Q639.6 808.8 640.8 810.6 V811.8 Q642.2 810.4 643.2 812.2 V814.8 Q644.6 813.8 645.4 815.4 Q647.2 822 643.6 829 Z" fill="#fbfbfb" stroke="#444" stroke-width="1.2" stroke-linejoin="round"/><path d="M635.6 813.4 V818.6 M638.2 810.8 V818.2 M640.8 811 V818.4 M643.2 812.6 V818.8" stroke="#444" stroke-width="1"/>
<circle cx="667.8" cy="817.8" r="5.8" fill="#dcebf3" stroke="#444" stroke-width="1.3"/><path d="M672 822.4 L677.6 828" stroke="#333" stroke-width="2.8" stroke-linecap="round"/><path d="M675.6 813 h5.2 M678.2 810.4 v5.2 M675.6 817.6 h5.2" stroke="#333" stroke-width="1.1"/>
<rect x="693.2" y="809.2" width="17.6" height="18.8" fill="none" stroke="#444" stroke-width="1" stroke-dasharray="2.2 1.8"/><circle cx="701" cy="817.2" r="7.4" fill="#dcebf3" stroke="#444" stroke-width="1.4"/><path d="M706.4 822.8 L712.2 828.6" stroke="#333" stroke-width="3" stroke-linecap="round"/>
<path d="M719.4 816.2 h6.6 l-3.3 4.2 Z" fill="#222"/>
<rect x="744.2" y="809.6" width="19" height="14.8" rx="1" fill="#f3f3f3" stroke="#444" stroke-width="1.2"/><rect x="746.4" y="811.8" width="14.6" height="10.2" fill="url(#monG)" stroke="#3d5f91" stroke-width="0.8"/><path d="M751 824.6 h5.6 l1.6 3.4 h-8.8 Z" fill="#e2e2e2" stroke="#555" stroke-width="0.9"/>
<path d="M767.2 816.2 h6.6 l-3.3 4.2 Z" fill="#222"/>
<rect x="782.8" y="809.6" width="19.4" height="19" fill="#a5acc0" stroke="#444" stroke-width="1.1"/><rect x="784.3" y="811.0" width="2.3" height="2.3" fill="#f2f3f7"/><rect x="784.3" y="814.6" width="2.3" height="2.3" fill="#f2f3f7"/><rect x="784.3" y="818.2" width="2.3" height="2.3" fill="#d9dce6"/><rect x="784.3" y="821.8" width="2.3" height="2.3" fill="#d9dce6"/><rect x="784.3" y="825.4" width="2.3" height="2.3" fill="#c3c8d6"/><rect x="787.9" y="811.0" width="2.3" height="2.3" fill="#f2f3f7"/><rect x="787.9" y="814.6" width="2.3" height="2.3" fill="#f2f3f7"/><rect x="787.9" y="818.2" width="2.3" height="2.3" fill="#d9dce6"/><rect x="787.9" y="821.8" width="2.3" height="2.3" fill="#d9dce6"/><rect x="787.9" y="825.4" width="2.3" height="2.3" fill="#c3c8d6"/><rect x="791.5" y="811.0" width="2.3" height="2.3" fill="#f2f3f7"/><rect x="791.5" y="814.6" width="2.3" height="2.3" fill="#f2f3f7"/><rect x="791.5" y="818.2" width="2.3" height="2.3" fill="#d9dce6"/><rect x="791.5" y="821.8" width="2.3" height="2.3" fill="#d9dce6"/><rect x="791.5" y="825.4" width="2.3" height="2.3" fill="#c3c8d6"/><rect x="795.1" y="811.0" width="2.3" height="2.3" fill="#f2f3f7"/><rect x="795.1" y="814.6" width="2.3" height="2.3" fill="#f2f3f7"/><rect x="795.1" y="818.2" width="2.3" height="2.3" fill="#d9dce6"/><rect x="795.1" y="821.8" width="2.3" height="2.3" fill="#d9dce6"/><rect x="795.1" y="825.4" width="2.3" height="2.3" fill="#c3c8d6"/><rect x="798.7" y="811.0" width="2.3" height="2.3" fill="#f2f3f7"/><rect x="798.7" y="814.6" width="2.3" height="2.3" fill="#f2f3f7"/><rect x="798.7" y="818.2" width="2.3" height="2.3" fill="#d9dce6"/><rect x="798.7" y="821.8" width="2.3" height="2.3" fill="#d9dce6"/><rect x="798.7" y="825.4" width="2.3" height="2.3" fill="#c3c8d6"/>
<path d="M806.0 816.2 h6.6 l-3.3 4.2 Z" fill="#222"/>
<g stroke="#3a3a3a" stroke-width="1.2" stroke-linejoin="round"><path d="M831.4 814.4 L835.6 810.4 H849.4 V824 L845.4 828.4 H831.4 Z" fill="#f4f4f4"/><rect x="831.4" y="814.4" width="14" height="14" fill="#7ba3d8"/><path d="M845.4 814.4 L849.4 810.4 M845.4 828.4 V814.4"/><circle cx="836.4" cy="823.4" r="2.8" fill="#e3ebf6" stroke-width="1"/><path d="M838.2 821.2 L841.6 817.8" stroke-width="2.4" stroke="#e3ebf6"/><path d="M837.4 820.4 L840.8 817 M839.4 822.4 L842.8 819" stroke-width="0.9"/></g>
<path d="M854.4 816.2 h6.6 l-3.3 4.2 Z" fill="#222"/>
<rect x="1105.5" y="177.5" width="12" height="626.5" fill="#f0f0f0" stroke="#c4c4c4" stroke-width="1"/><rect x="1105" y="207.2" width="10" height="1.6" fill="#fdfdfd"/><rect x="1105" y="208.8" width="10" height="2.6" fill="#cfcfcf"/><rect x="1105" y="211.4" width="2.8" height="32" fill="#c9c9c9"/><path d="M1108 188 V196.4" stroke="#8a8a8a" stroke-width="1.3"/><path d="M1110.5 185.4 V199.4" stroke="#4f4f4f" stroke-width="1.2"/><rect x="1107.6" y="400.8" width="7" height="2.6" fill="#c4c4c4"/><rect x="1107.6" y="522" width="7" height="2.4" fill="#c4c4c4"/><rect x="1106" y="759.6" width="9" height="1.2" fill="#d4d4d4"/>
</svg>
</body></html>
